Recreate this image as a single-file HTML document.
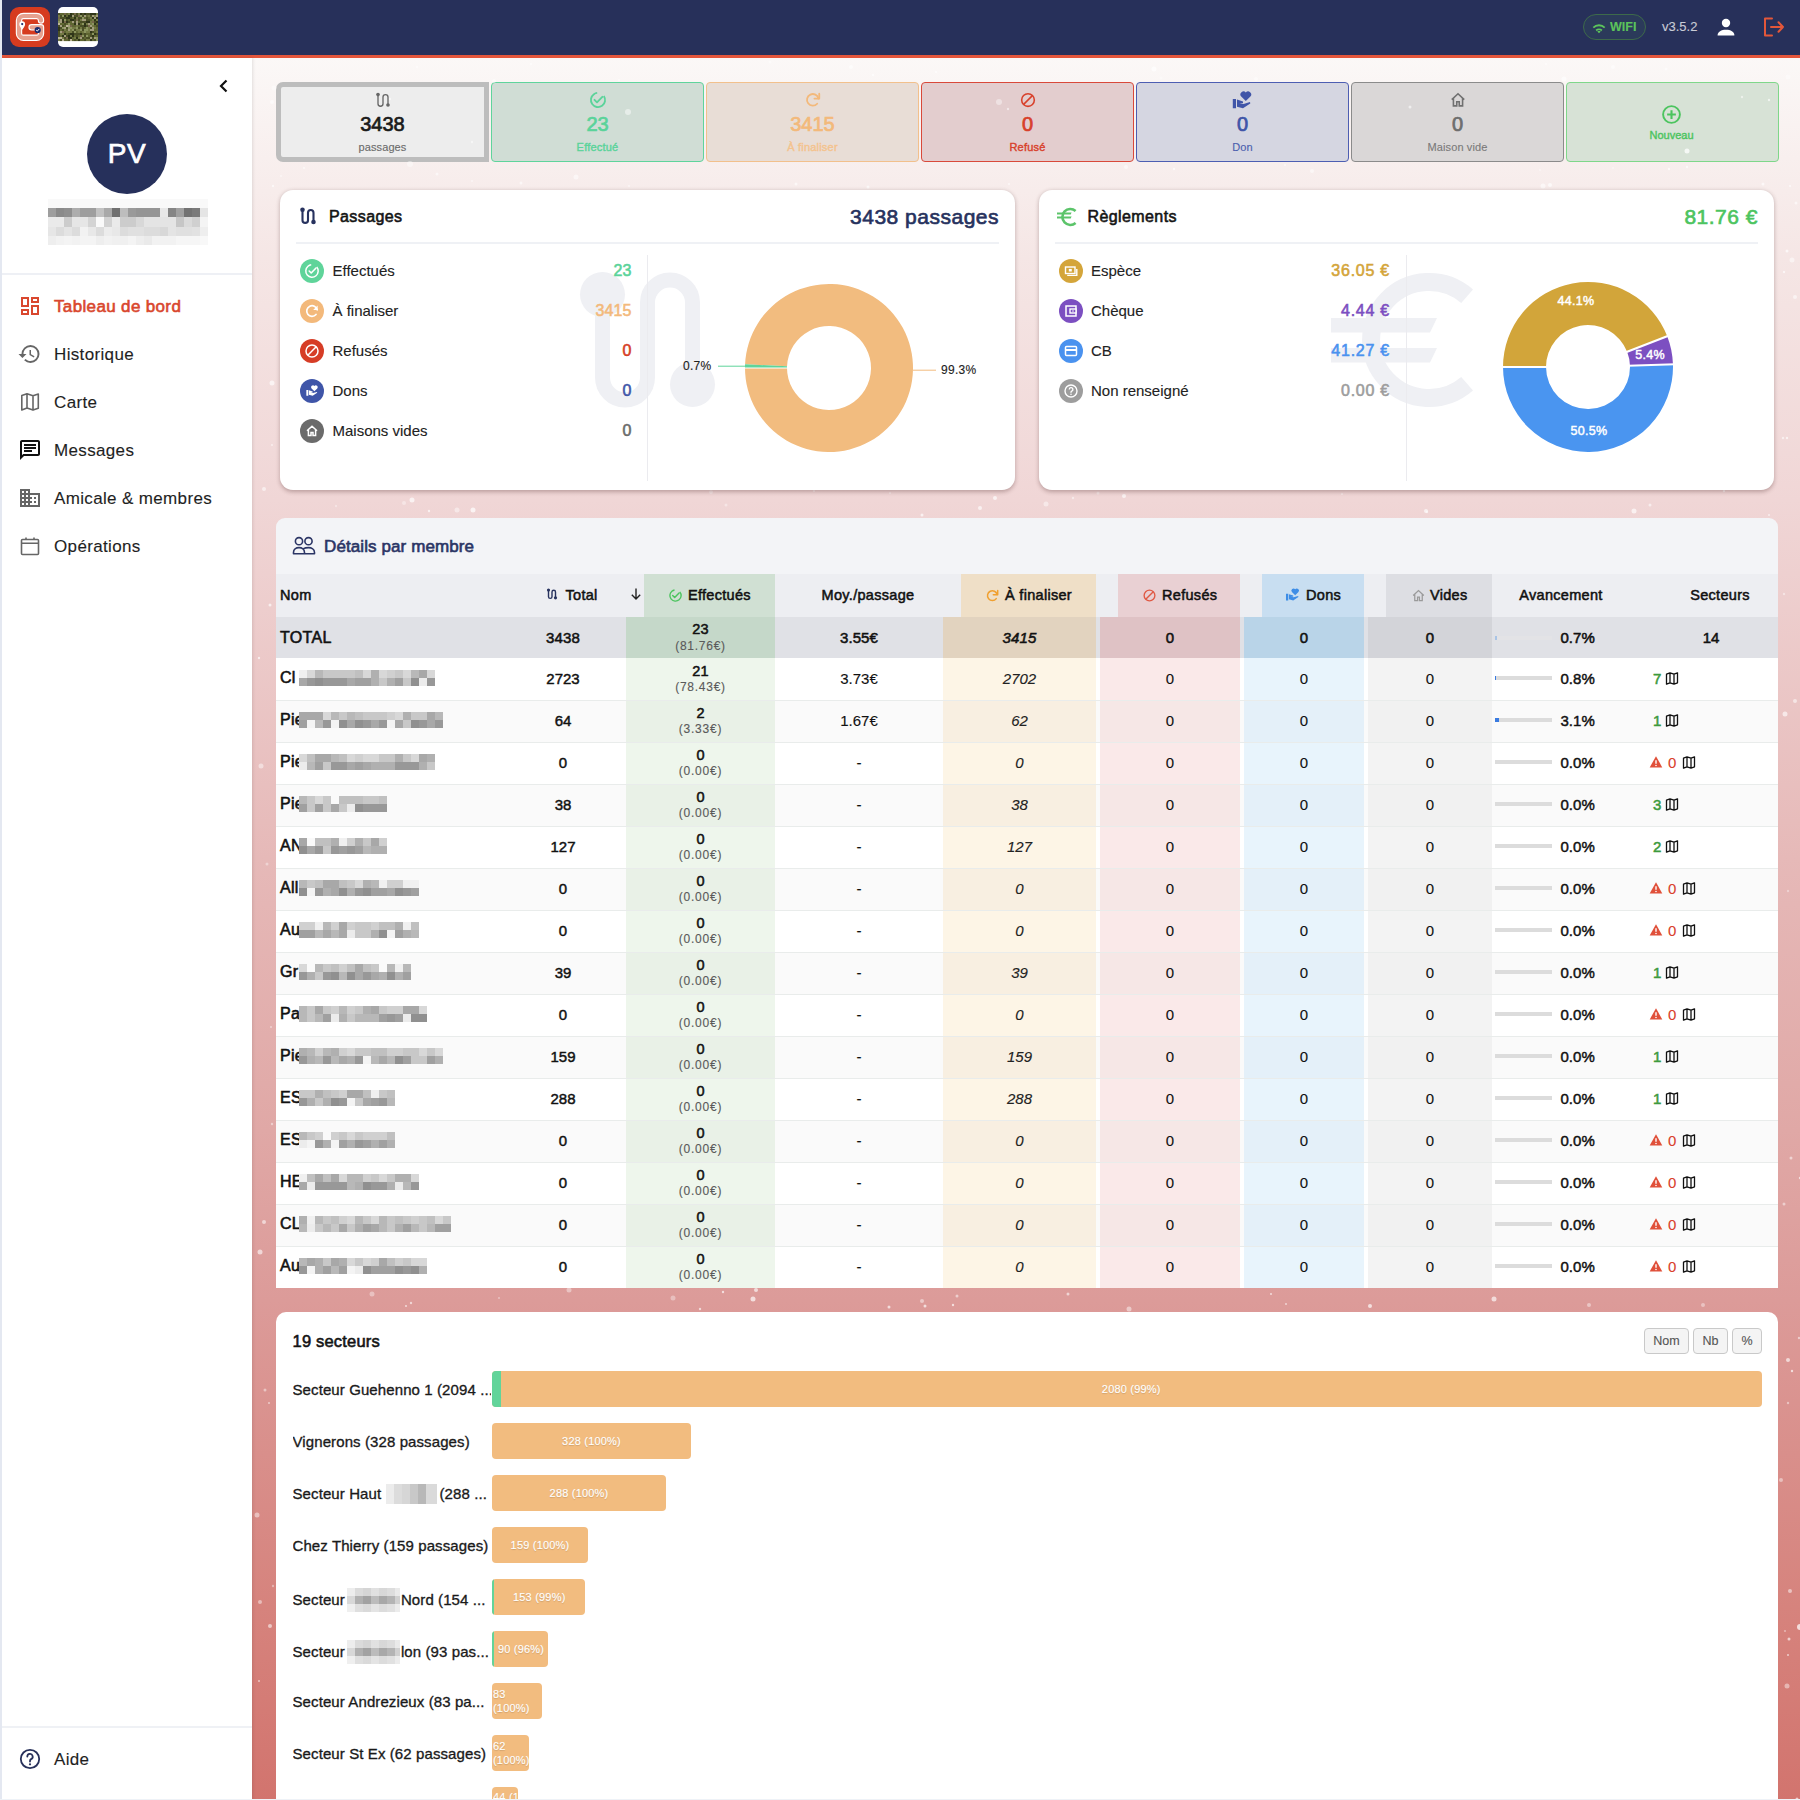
<!DOCTYPE html>
<html lang="fr">
<head>
<meta charset="utf-8">
<title>Tableau de bord</title>
<style>
*{box-sizing:border-box;margin:0;padding:0}
html,body{width:1800px;height:1800px;overflow:hidden}
body{position:relative;font-family:"Liberation Sans",sans-serif;color:#1f1f1f;background:#fff;-webkit-text-stroke:0.12px currentColor}
.a{position:absolute}
svg{display:block}
#topbar{left:0;top:0;width:1800px;height:55px;background:#27305a}
#redline{left:0;top:55px;width:1800px;height:3px;background:#e4553b}
#leftedge{left:0;top:0;width:2px;height:1800px;background:#e4e8f1;z-index:50}
#sidebar{left:2px;top:58px;width:250px;height:1742px;background:#fff;box-shadow:1px 0 3px rgba(0,0,0,.10);z-index:2}
#main{left:252px;top:58px;width:1548px;height:1742px;
 background:linear-gradient(to bottom,#fbf8f7 0px,#f5e6e5 200px,#f0d6d6 442px,#e6b9b8 800px,#e0a8a6 1072px,#dc9b99 1242px,#d6837d 1550px,#d2746e 1742px)}
.card{position:absolute;background:#fff;border-radius:13px;box-shadow:0 1.5px 4px rgba(70,35,35,.32)}
.stat{position:absolute;top:82px;height:80px;border:1px solid;border-radius:4px;text-align:center}
.nav{position:absolute;left:54px;font-size:17px;color:#1f1f1f;line-height:20px;letter-spacing:.35px}
.navi{position:absolute;left:18px}
.blur{display:inline-block;width:51px;height:20px;margin-right:3px;vertical-align:-5px;background:linear-gradient(180deg,rgba(255,255,255,0) 0 12px,rgba(0,0,0,0) 12px 20px),linear-gradient(90deg,#ececec 0 8px,#dcdcdc 8px 16px,#d6d6d6 16px 24px,#c8c8c8 24px 32px,#b8b8b8 32px 40px,#dadada 40px 51px)}
.blur2{display:inline-block;width:53px;height:24px;margin:0 1px 0 2px;vertical-align:-7px;background:linear-gradient(180deg,rgba(255,255,255,.55) 0 8px,rgba(255,255,255,0) 8px 16px,rgba(255,255,255,.6) 16px 24px),linear-gradient(90deg,#d8d8d8 0 8px,#b0b0b0 8px 16px,#a2a2a2 16px 24px,#bcbcbc 24px 32px,#a8a8a8 32px 40px,#b4b4b4 40px 48px,#d0d0d0 48px 53px)}
</style>
</head>
<body>
<div id="leftedge" class="a"></div>
<div id="topbar" class="a"></div>
<div id="redline" class="a"></div>
<div id="sidebar" class="a"></div>
<div id="main" class="a"></div>
<div class="a" style="left:10px;top:7px;width:40px;height:40px;border-radius:9px;background:#d63b1f"></div>
<svg class="a" style="left:10px;top:7px" width="40" height="40" viewBox="10 7 40 40">
<path d="M41 20.6 C41 18 39 16 36.6 16 H23.4 C21 16 19 18 19 20.4 V33.4 C19 35.8 21 37.8 23.4 37.8 H36.6 C39 37.8 41 35.8 41 33.4 V27.3 H31.6" fill="none" stroke="#fff" stroke-width="6.4" stroke-linecap="round" stroke-linejoin="round"/>
<path d="M41 20.6 C41 18 39 16 36.6 16 H23.4 C21 16 19 18 19 20.4 V33.4 C19 35.8 21 37.8 23.4 37.8 H36.6 C39 37.8 41 35.8 41 33.4 V27.3 H31.6" fill="none" stroke="#e6a18f" stroke-width="4.2" stroke-linecap="round" stroke-linejoin="round"/>
<path d="M22.2 36.8 C20.6 34.5 19.3 32.7 19.3 31.2 A2.9 2.9 0 0 1 25.1 31.2 C25.1 32.7 23.8 34.5 22.2 36.8Z" fill="#fff" transform="translate(0 -7)"/>
<circle cx="22.2" cy="24.1" r="1.1" fill="#1b2a6b"/>
<circle cx="37.7" cy="30" r="3.1" fill="#1b2a6b"/>
<path d="M36.2 30.1 L37.3 31.1 L39.3 28.9" fill="none" stroke="#fff" stroke-width="1"/>
</svg>
<div class="a" style="left:58px;top:7px;width:40px;height:40px;border-radius:5px;background:#fff;overflow:hidden"><svg width="40" height="40" viewBox="58 7 40 40"><g><rect x="58" y="13" width="2.1" height="2.1" fill="#4a4f26"/><rect x="60" y="13" width="2.1" height="2.1" fill="#5f6632"/><rect x="62" y="13" width="2.1" height="2.1" fill="#5f6632"/><rect x="64" y="13" width="2.1" height="2.1" fill="#76674a"/><rect x="66" y="13" width="2.1" height="2.1" fill="#5f6632"/><rect x="68" y="13" width="2.1" height="2.1" fill="#747a45"/><rect x="70" y="13" width="2.1" height="2.1" fill="#2f3519"/><rect x="72" y="13" width="2.1" height="2.1" fill="#4a4f26"/><rect x="74" y="13" width="2.1" height="2.1" fill="#76674a"/><rect x="76" y="13" width="2.1" height="2.1" fill="#4a4f26"/><rect x="78" y="13" width="2.1" height="2.1" fill="#747a45"/><rect x="80" y="13" width="2.1" height="2.1" fill="#2f3519"/><rect x="82" y="13" width="2.1" height="2.1" fill="#4a4f26"/><rect x="84" y="13" width="2.1" height="2.1" fill="#2f3519"/><rect x="86" y="13" width="2.1" height="2.1" fill="#4a4f26"/><rect x="88" y="13" width="2.1" height="2.1" fill="#4a4f26"/><rect x="90" y="13" width="2.1" height="2.1" fill="#2f3519"/><rect x="92" y="13" width="2.1" height="2.1" fill="#2f3519"/><rect x="94" y="13" width="2.1" height="2.1" fill="#2f3519"/><rect x="96" y="13" width="2.1" height="2.1" fill="#747a45"/><rect x="58" y="15" width="2.1" height="2.1" fill="#747a45"/><rect x="60" y="15" width="2.1" height="2.1" fill="#4a4f26"/><rect x="62" y="15" width="2.1" height="2.1" fill="#8c9660"/><rect x="64" y="15" width="2.1" height="2.1" fill="#2f3519"/><rect x="66" y="15" width="2.1" height="2.1" fill="#5f6632"/><rect x="68" y="15" width="2.1" height="2.1" fill="#2f3519"/><rect x="70" y="15" width="2.1" height="2.1" fill="#2f3519"/><rect x="72" y="15" width="2.1" height="2.1" fill="#a39d7e"/><rect x="74" y="15" width="2.1" height="2.1" fill="#4a4f26"/><rect x="76" y="15" width="2.1" height="2.1" fill="#4a4f26"/><rect x="78" y="15" width="2.1" height="2.1" fill="#76674a"/><rect x="80" y="15" width="2.1" height="2.1" fill="#8c9660"/><rect x="82" y="15" width="2.1" height="2.1" fill="#4a4f26"/><rect x="84" y="15" width="2.1" height="2.1" fill="#a39d7e"/><rect x="86" y="15" width="2.1" height="2.1" fill="#5f6632"/><rect x="88" y="15" width="2.1" height="2.1" fill="#747a45"/><rect x="90" y="15" width="2.1" height="2.1" fill="#4a4f26"/><rect x="92" y="15" width="2.1" height="2.1" fill="#a39d7e"/><rect x="94" y="15" width="2.1" height="2.1" fill="#747a45"/><rect x="96" y="15" width="2.1" height="2.1" fill="#a39d7e"/><rect x="58" y="17" width="2.1" height="2.1" fill="#76674a"/><rect x="60" y="17" width="2.1" height="2.1" fill="#4a4f26"/><rect x="62" y="17" width="2.1" height="2.1" fill="#4a4f26"/><rect x="64" y="17" width="2.1" height="2.1" fill="#4a4f26"/><rect x="66" y="17" width="2.1" height="2.1" fill="#2f3519"/><rect x="68" y="17" width="2.1" height="2.1" fill="#2f3519"/><rect x="70" y="17" width="2.1" height="2.1" fill="#4a4f26"/><rect x="72" y="17" width="2.1" height="2.1" fill="#5f6632"/><rect x="74" y="17" width="2.1" height="2.1" fill="#2f3519"/><rect x="76" y="17" width="2.1" height="2.1" fill="#747a45"/><rect x="78" y="17" width="2.1" height="2.1" fill="#4a4f26"/><rect x="80" y="17" width="2.1" height="2.1" fill="#4a4f26"/><rect x="82" y="17" width="2.1" height="2.1" fill="#8c9660"/><rect x="84" y="17" width="2.1" height="2.1" fill="#5f6632"/><rect x="86" y="17" width="2.1" height="2.1" fill="#4a4f26"/><rect x="88" y="17" width="2.1" height="2.1" fill="#5f6632"/><rect x="90" y="17" width="2.1" height="2.1" fill="#747a45"/><rect x="92" y="17" width="2.1" height="2.1" fill="#2f3519"/><rect x="94" y="17" width="2.1" height="2.1" fill="#a39d7e"/><rect x="96" y="17" width="2.1" height="2.1" fill="#2f3519"/><rect x="58" y="19" width="2.1" height="2.1" fill="#747a45"/><rect x="60" y="19" width="2.1" height="2.1" fill="#a39d7e"/><rect x="62" y="19" width="2.1" height="2.1" fill="#2f3519"/><rect x="64" y="19" width="2.1" height="2.1" fill="#8c9660"/><rect x="66" y="19" width="2.1" height="2.1" fill="#4a4f26"/><rect x="68" y="19" width="2.1" height="2.1" fill="#5f6632"/><rect x="70" y="19" width="2.1" height="2.1" fill="#2f3519"/><rect x="72" y="19" width="2.1" height="2.1" fill="#2f3519"/><rect x="74" y="19" width="2.1" height="2.1" fill="#4a4f26"/><rect x="76" y="19" width="2.1" height="2.1" fill="#76674a"/><rect x="78" y="19" width="2.1" height="2.1" fill="#4a4f26"/><rect x="80" y="19" width="2.1" height="2.1" fill="#747a45"/><rect x="82" y="19" width="2.1" height="2.1" fill="#a39d7e"/><rect x="84" y="19" width="2.1" height="2.1" fill="#a39d7e"/><rect x="86" y="19" width="2.1" height="2.1" fill="#4a4f26"/><rect x="88" y="19" width="2.1" height="2.1" fill="#4a4f26"/><rect x="90" y="19" width="2.1" height="2.1" fill="#5f6632"/><rect x="92" y="19" width="2.1" height="2.1" fill="#747a45"/><rect x="94" y="19" width="2.1" height="2.1" fill="#2f3519"/><rect x="96" y="19" width="2.1" height="2.1" fill="#747a45"/><rect x="58" y="21" width="2.1" height="2.1" fill="#8c9660"/><rect x="60" y="21" width="2.1" height="2.1" fill="#a39d7e"/><rect x="62" y="21" width="2.1" height="2.1" fill="#2f3519"/><rect x="64" y="21" width="2.1" height="2.1" fill="#76674a"/><rect x="66" y="21" width="2.1" height="2.1" fill="#2f3519"/><rect x="68" y="21" width="2.1" height="2.1" fill="#4a4f26"/><rect x="70" y="21" width="2.1" height="2.1" fill="#5f6632"/><rect x="72" y="21" width="2.1" height="2.1" fill="#a39d7e"/><rect x="74" y="21" width="2.1" height="2.1" fill="#4a4f26"/><rect x="76" y="21" width="2.1" height="2.1" fill="#a39d7e"/><rect x="78" y="21" width="2.1" height="2.1" fill="#5f6632"/><rect x="80" y="21" width="2.1" height="2.1" fill="#4a4f26"/><rect x="82" y="21" width="2.1" height="2.1" fill="#4a4f26"/><rect x="84" y="21" width="2.1" height="2.1" fill="#4a4f26"/><rect x="86" y="21" width="2.1" height="2.1" fill="#2f3519"/><rect x="88" y="21" width="2.1" height="2.1" fill="#2f3519"/><rect x="90" y="21" width="2.1" height="2.1" fill="#747a45"/><rect x="92" y="21" width="2.1" height="2.1" fill="#76674a"/><rect x="94" y="21" width="2.1" height="2.1" fill="#4a4f26"/><rect x="96" y="21" width="2.1" height="2.1" fill="#2f3519"/><rect x="58" y="23" width="2.1" height="2.1" fill="#bdb598"/><rect x="60" y="23" width="2.1" height="2.1" fill="#5f6632"/><rect x="62" y="23" width="2.1" height="2.1" fill="#5f6632"/><rect x="64" y="23" width="2.1" height="2.1" fill="#4a4f26"/><rect x="66" y="23" width="2.1" height="2.1" fill="#5f6632"/><rect x="68" y="23" width="2.1" height="2.1" fill="#8c9660"/><rect x="70" y="23" width="2.1" height="2.1" fill="#5f6632"/><rect x="72" y="23" width="2.1" height="2.1" fill="#5f6632"/><rect x="74" y="23" width="2.1" height="2.1" fill="#2f3519"/><rect x="76" y="23" width="2.1" height="2.1" fill="#a39d7e"/><rect x="78" y="23" width="2.1" height="2.1" fill="#2f3519"/><rect x="80" y="23" width="2.1" height="2.1" fill="#5f6632"/><rect x="82" y="23" width="2.1" height="2.1" fill="#8c9660"/><rect x="84" y="23" width="2.1" height="2.1" fill="#2f3519"/><rect x="86" y="23" width="2.1" height="2.1" fill="#747a45"/><rect x="88" y="23" width="2.1" height="2.1" fill="#a39d7e"/><rect x="90" y="23" width="2.1" height="2.1" fill="#747a45"/><rect x="92" y="23" width="2.1" height="2.1" fill="#8c9660"/><rect x="94" y="23" width="2.1" height="2.1" fill="#2f3519"/><rect x="96" y="23" width="2.1" height="2.1" fill="#5f6632"/><rect x="58" y="25" width="2.1" height="2.1" fill="#4a4f26"/><rect x="60" y="25" width="2.1" height="2.1" fill="#a39d7e"/><rect x="62" y="25" width="2.1" height="2.1" fill="#4a4f26"/><rect x="64" y="25" width="2.1" height="2.1" fill="#5f6632"/><rect x="66" y="25" width="2.1" height="2.1" fill="#bdb598"/><rect x="68" y="25" width="2.1" height="2.1" fill="#a39d7e"/><rect x="70" y="25" width="2.1" height="2.1" fill="#76674a"/><rect x="72" y="25" width="2.1" height="2.1" fill="#5f6632"/><rect x="74" y="25" width="2.1" height="2.1" fill="#5f6632"/><rect x="76" y="25" width="2.1" height="2.1" fill="#747a45"/><rect x="78" y="25" width="2.1" height="2.1" fill="#5f6632"/><rect x="80" y="25" width="2.1" height="2.1" fill="#4a4f26"/><rect x="82" y="25" width="2.1" height="2.1" fill="#4a4f26"/><rect x="84" y="25" width="2.1" height="2.1" fill="#2f3519"/><rect x="86" y="25" width="2.1" height="2.1" fill="#4a4f26"/><rect x="88" y="25" width="2.1" height="2.1" fill="#76674a"/><rect x="90" y="25" width="2.1" height="2.1" fill="#a39d7e"/><rect x="92" y="25" width="2.1" height="2.1" fill="#747a45"/><rect x="94" y="25" width="2.1" height="2.1" fill="#5f6632"/><rect x="96" y="25" width="2.1" height="2.1" fill="#4a4f26"/><rect x="58" y="27" width="2.1" height="2.1" fill="#2f3519"/><rect x="60" y="27" width="2.1" height="2.1" fill="#4a4f26"/><rect x="62" y="27" width="2.1" height="2.1" fill="#8c9660"/><rect x="64" y="27" width="2.1" height="2.1" fill="#a39d7e"/><rect x="66" y="27" width="2.1" height="2.1" fill="#4a4f26"/><rect x="68" y="27" width="2.1" height="2.1" fill="#8c9660"/><rect x="70" y="27" width="2.1" height="2.1" fill="#8c9660"/><rect x="72" y="27" width="2.1" height="2.1" fill="#747a45"/><rect x="74" y="27" width="2.1" height="2.1" fill="#747a45"/><rect x="76" y="27" width="2.1" height="2.1" fill="#8c9660"/><rect x="78" y="27" width="2.1" height="2.1" fill="#4a4f26"/><rect x="80" y="27" width="2.1" height="2.1" fill="#747a45"/><rect x="82" y="27" width="2.1" height="2.1" fill="#4a4f26"/><rect x="84" y="27" width="2.1" height="2.1" fill="#5f6632"/><rect x="86" y="27" width="2.1" height="2.1" fill="#8c9660"/><rect x="88" y="27" width="2.1" height="2.1" fill="#747a45"/><rect x="90" y="27" width="2.1" height="2.1" fill="#4a4f26"/><rect x="92" y="27" width="2.1" height="2.1" fill="#a39d7e"/><rect x="94" y="27" width="2.1" height="2.1" fill="#747a45"/><rect x="96" y="27" width="2.1" height="2.1" fill="#5f6632"/><rect x="58" y="29" width="2.1" height="2.1" fill="#2f3519"/><rect x="60" y="29" width="2.1" height="2.1" fill="#5f6632"/><rect x="62" y="29" width="2.1" height="2.1" fill="#4a4f26"/><rect x="64" y="29" width="2.1" height="2.1" fill="#747a45"/><rect x="66" y="29" width="2.1" height="2.1" fill="#5f6632"/><rect x="68" y="29" width="2.1" height="2.1" fill="#a39d7e"/><rect x="70" y="29" width="2.1" height="2.1" fill="#747a45"/><rect x="72" y="29" width="2.1" height="2.1" fill="#8c9660"/><rect x="74" y="29" width="2.1" height="2.1" fill="#4a4f26"/><rect x="76" y="29" width="2.1" height="2.1" fill="#747a45"/><rect x="78" y="29" width="2.1" height="2.1" fill="#747a45"/><rect x="80" y="29" width="2.1" height="2.1" fill="#8c9660"/><rect x="82" y="29" width="2.1" height="2.1" fill="#4a4f26"/><rect x="84" y="29" width="2.1" height="2.1" fill="#8c9660"/><rect x="86" y="29" width="2.1" height="2.1" fill="#8c9660"/><rect x="88" y="29" width="2.1" height="2.1" fill="#747a45"/><rect x="90" y="29" width="2.1" height="2.1" fill="#a39d7e"/><rect x="92" y="29" width="2.1" height="2.1" fill="#a39d7e"/><rect x="94" y="29" width="2.1" height="2.1" fill="#5f6632"/><rect x="96" y="29" width="2.1" height="2.1" fill="#5f6632"/><rect x="58" y="31" width="2.1" height="2.1" fill="#4a4f26"/><rect x="60" y="31" width="2.1" height="2.1" fill="#a39d7e"/><rect x="62" y="31" width="2.1" height="2.1" fill="#76674a"/><rect x="64" y="31" width="2.1" height="2.1" fill="#5f6632"/><rect x="66" y="31" width="2.1" height="2.1" fill="#747a45"/><rect x="68" y="31" width="2.1" height="2.1" fill="#747a45"/><rect x="70" y="31" width="2.1" height="2.1" fill="#747a45"/><rect x="72" y="31" width="2.1" height="2.1" fill="#4a4f26"/><rect x="74" y="31" width="2.1" height="2.1" fill="#8c9660"/><rect x="76" y="31" width="2.1" height="2.1" fill="#5f6632"/><rect x="78" y="31" width="2.1" height="2.1" fill="#747a45"/><rect x="80" y="31" width="2.1" height="2.1" fill="#5f6632"/><rect x="82" y="31" width="2.1" height="2.1" fill="#747a45"/><rect x="84" y="31" width="2.1" height="2.1" fill="#8c9660"/><rect x="86" y="31" width="2.1" height="2.1" fill="#747a45"/><rect x="88" y="31" width="2.1" height="2.1" fill="#747a45"/><rect x="90" y="31" width="2.1" height="2.1" fill="#2f3519"/><rect x="92" y="31" width="2.1" height="2.1" fill="#4a4f26"/><rect x="94" y="31" width="2.1" height="2.1" fill="#5f6632"/><rect x="96" y="31" width="2.1" height="2.1" fill="#747a45"/><rect x="58" y="33" width="2.1" height="2.1" fill="#4a4f26"/><rect x="60" y="33" width="2.1" height="2.1" fill="#747a45"/><rect x="62" y="33" width="2.1" height="2.1" fill="#747a45"/><rect x="64" y="33" width="2.1" height="2.1" fill="#2f3519"/><rect x="66" y="33" width="2.1" height="2.1" fill="#5f6632"/><rect x="68" y="33" width="2.1" height="2.1" fill="#4a4f26"/><rect x="70" y="33" width="2.1" height="2.1" fill="#2f3519"/><rect x="72" y="33" width="2.1" height="2.1" fill="#2f3519"/><rect x="74" y="33" width="2.1" height="2.1" fill="#4a4f26"/><rect x="76" y="33" width="2.1" height="2.1" fill="#4a4f26"/><rect x="78" y="33" width="2.1" height="2.1" fill="#4a4f26"/><rect x="80" y="33" width="2.1" height="2.1" fill="#2f3519"/><rect x="82" y="33" width="2.1" height="2.1" fill="#5f6632"/><rect x="84" y="33" width="2.1" height="2.1" fill="#4a4f26"/><rect x="86" y="33" width="2.1" height="2.1" fill="#5f6632"/><rect x="88" y="33" width="2.1" height="2.1" fill="#5f6632"/><rect x="90" y="33" width="2.1" height="2.1" fill="#4a4f26"/><rect x="92" y="33" width="2.1" height="2.1" fill="#8c9660"/><rect x="94" y="33" width="2.1" height="2.1" fill="#2f3519"/><rect x="96" y="33" width="2.1" height="2.1" fill="#4a4f26"/><rect x="58" y="35" width="2.1" height="2.1" fill="#4a4f26"/><rect x="60" y="35" width="2.1" height="2.1" fill="#5f6632"/><rect x="62" y="35" width="2.1" height="2.1" fill="#2f3519"/><rect x="64" y="35" width="2.1" height="2.1" fill="#a39d7e"/><rect x="66" y="35" width="2.1" height="2.1" fill="#4a4f26"/><rect x="68" y="35" width="2.1" height="2.1" fill="#2f3519"/><rect x="70" y="35" width="2.1" height="2.1" fill="#747a45"/><rect x="72" y="35" width="2.1" height="2.1" fill="#2f3519"/><rect x="74" y="35" width="2.1" height="2.1" fill="#5f6632"/><rect x="76" y="35" width="2.1" height="2.1" fill="#4a4f26"/><rect x="78" y="35" width="2.1" height="2.1" fill="#5f6632"/><rect x="80" y="35" width="2.1" height="2.1" fill="#76674a"/><rect x="82" y="35" width="2.1" height="2.1" fill="#8c9660"/><rect x="84" y="35" width="2.1" height="2.1" fill="#4a4f26"/><rect x="86" y="35" width="2.1" height="2.1" fill="#8c9660"/><rect x="88" y="35" width="2.1" height="2.1" fill="#5f6632"/><rect x="90" y="35" width="2.1" height="2.1" fill="#4a4f26"/><rect x="92" y="35" width="2.1" height="2.1" fill="#2f3519"/><rect x="94" y="35" width="2.1" height="2.1" fill="#5f6632"/><rect x="96" y="35" width="2.1" height="2.1" fill="#5f6632"/><rect x="58" y="37" width="2.1" height="2.1" fill="#bdb598"/><rect x="60" y="37" width="2.1" height="2.1" fill="#bdb598"/><rect x="62" y="37" width="2.1" height="2.1" fill="#747a45"/><rect x="64" y="37" width="2.1" height="2.1" fill="#4a4f26"/><rect x="66" y="37" width="2.1" height="2.1" fill="#76674a"/><rect x="68" y="37" width="2.1" height="2.1" fill="#2f3519"/><rect x="70" y="37" width="2.1" height="2.1" fill="#2f3519"/><rect x="72" y="37" width="2.1" height="2.1" fill="#5f6632"/><rect x="74" y="37" width="2.1" height="2.1" fill="#747a45"/><rect x="76" y="37" width="2.1" height="2.1" fill="#2f3519"/><rect x="78" y="37" width="2.1" height="2.1" fill="#747a45"/><rect x="80" y="37" width="2.1" height="2.1" fill="#a39d7e"/><rect x="82" y="37" width="2.1" height="2.1" fill="#4a4f26"/><rect x="84" y="37" width="2.1" height="2.1" fill="#5f6632"/><rect x="86" y="37" width="2.1" height="2.1" fill="#4a4f26"/><rect x="88" y="37" width="2.1" height="2.1" fill="#4a4f26"/><rect x="90" y="37" width="2.1" height="2.1" fill="#a39d7e"/><rect x="92" y="37" width="2.1" height="2.1" fill="#4a4f26"/><rect x="94" y="37" width="2.1" height="2.1" fill="#a39d7e"/><rect x="96" y="37" width="2.1" height="2.1" fill="#8c9660"/><rect x="58" y="39" width="2.1" height="2.1" fill="#747a45"/><rect x="60" y="39" width="2.1" height="2.1" fill="#4a4f26"/><rect x="62" y="39" width="2.1" height="2.1" fill="#bdb598"/><rect x="64" y="39" width="2.1" height="2.1" fill="#5f6632"/><rect x="66" y="39" width="2.1" height="2.1" fill="#5f6632"/><rect x="68" y="39" width="2.1" height="2.1" fill="#4a4f26"/><rect x="70" y="39" width="2.1" height="2.1" fill="#bdb598"/><rect x="72" y="39" width="2.1" height="2.1" fill="#5f6632"/><rect x="74" y="39" width="2.1" height="2.1" fill="#4a4f26"/><rect x="76" y="39" width="2.1" height="2.1" fill="#5f6632"/><rect x="78" y="39" width="2.1" height="2.1" fill="#2f3519"/><rect x="80" y="39" width="2.1" height="2.1" fill="#5f6632"/><rect x="82" y="39" width="2.1" height="2.1" fill="#5f6632"/><rect x="84" y="39" width="2.1" height="2.1" fill="#4a4f26"/><rect x="86" y="39" width="2.1" height="2.1" fill="#747a45"/><rect x="88" y="39" width="2.1" height="2.1" fill="#747a45"/><rect x="90" y="39" width="2.1" height="2.1" fill="#2f3519"/><rect x="92" y="39" width="2.1" height="2.1" fill="#5f6632"/><rect x="94" y="39" width="2.1" height="2.1" fill="#4a4f26"/><rect x="96" y="39" width="2.1" height="2.1" fill="#8c9660"/></g></svg></div>
<div class="a" style="left:1583px;top:14px;width:63px;height:26px;border-radius:13px;border:1px solid #3d6a4a;background:#2b3a5a"></div>
<svg class="a" style="left:1591px;top:19px" width="16" height="16" viewBox="0 0 24 24"><path fill="#5cc45b" d="M12 21.5l2.6-2.6a3.7 3.7 0 0 0-5.2 0z M6.8 16.3l1.9 1.9a4.7 4.7 0 0 1 6.6 0l1.9-1.9a7.4 7.4 0 0 0-10.4 0z M2.5 12l1.9 1.9a10.7 10.7 0 0 1 15.2 0l1.9-1.9a13.4 13.4 0 0 0-19 0z"/></svg>
<div class="a" style="left:1610px;top:19px;font-size:12.5px;font-weight:bold;color:#5cc45b;line-height:16px">WIFI</div>
<div class="a" style="left:1662px;top:19px;font-size:13px;color:#c9ccd6;line-height:16px">v3.5.2</div>
<svg class="a" style="left:1714px;top:15px" width="24" height="24" viewBox="0 0 24 24"><circle cx="12" cy="8" r="4.2" fill="#fff"/><path d="M3.6 20.4c0-3.6 3.8-5.6 8.4-5.6s8.4 2 8.4 5.6z" fill="#fff"/></svg>
<svg class="a" style="left:1762px;top:16px" width="24" height="22" viewBox="0 0 24 22"><path d="M10 2.5H3v17h7 M9 11h12 M16.5 6.3L21 11l-4.5 4.7" fill="none" stroke="#e3573a" stroke-width="2" stroke-linecap="round" stroke-linejoin="round"/></svg>

<svg class="a" style="left:216px;top:78px;z-index:3" width="16" height="16" viewBox="0 0 16 16"><path d="M10.5 2.5L5 8l5.5 5.5" fill="none" stroke="#111" stroke-width="2.2"/></svg>
<div class="a" style="left:87px;top:114px;width:80px;height:80px;border-radius:50%;background:#26305b;z-index:3;color:#fff;font-size:28px;line-height:80px;text-align:center;letter-spacing:.5px;-webkit-text-stroke:.7px #fff">PV</div>
<div class="a" style="left:48px;top:199px;width:160px;z-index:3"><div style="height:9px;background:linear-gradient(90deg,#f9f9f9 0px 8px,#f9f9f9 8px 16px,#f9f9f9 16px 24px,#f9f9f9 24px 32px,#f9f9f9 32px 40px,#f9f9f9 40px 48px,#f9f9f9 48px 56px,#f9f9f9 56px 64px,#f9f9f9 64px 72px,#f9f9f9 72px 80px,#f9f9f9 80px 88px,#f9f9f9 88px 96px,#f9f9f9 96px 104px,#f9f9f9 104px 112px,#f9f9f9 112px 120px,#f9f9f9 120px 128px,#f9f9f9 128px 136px,#f9f9f9 136px 144px,#f9f9f9 144px 152px,#f9f9f9 152px 160px)"></div><div style="height:9px;background:linear-gradient(90deg,#9e9e9e 0px 8px,#8a8a8a 8px 16px,#8f8f8f 16px 24px,#adadad 24px 32px,#9e9e9e 32px 40px,#9e9e9e 40px 48px,#c2c2c2 48px 56px,#a9a9a9 56px 64px,#707070 64px 72px,#bdbdbd 72px 80px,#9a9a9a 80px 88px,#959595 88px 96px,#959595 96px 104px,#959595 104px 112px,#e8e8e8 112px 120px,#858585 120px 128px,#a0a0a0 128px 136px,#727272 136px 144px,#7a7a7a 144px 152px,#e5e5e5 152px 160px)"></div><div style="height:10px;background:linear-gradient(90deg,#eaeaea 0px 8px,#eaeaea 8px 16px,#cccccc 16px 24px,#e6e6e6 24px 32px,#e6e6e6 32px 40px,#d4d4d4 40px 48px,#fafafa 48px 56px,#d2d2d2 56px 64px,#eaeaea 64px 72px,#cccccc 72px 80px,#cccccc 80px 88px,#d8d8d8 88px 96px,#e4e4e4 96px 104px,#e4e4e4 104px 112px,#e4e4e4 112px 120px,#e4e4e4 120px 128px,#c6c6c6 128px 136px,#dadada 136px 144px,#d0d0d0 144px 152px,#f4f4f4 152px 160px)"></div><div style="height:9px;background:linear-gradient(90deg,#e6e6e6 0px 8px,#dcdcdc 8px 16px,#e4e4e4 16px 24px,#dcdcdc 24px 32px,#f2f2f2 32px 40px,#e8e8e8 40px 48px,#dcdcdc 48px 56px,#ececec 56px 64px,#e8e8e8 64px 72px,#dcdcdc 72px 80px,#e0e0e0 80px 88px,#e0e0e0 88px 96px,#dcdcdc 96px 104px,#dcdcdc 104px 112px,#d8d8d8 112px 120px,#e4e4e4 120px 128px,#e0e0e0 128px 136px,#e0e0e0 136px 144px,#e2e2e2 144px 152px,#eeeeee 152px 160px)"></div><div style="height:9px;background:linear-gradient(90deg,#eeeeee 0px 8px,#f2f2f2 8px 16px,#f4f4f4 16px 24px,#f2f2f2 24px 32px,#f4f4f4 32px 40px,#f4f4f4 40px 48px,#eeeeee 48px 56px,#f2f2f2 56px 64px,#f0f0f0 64px 72px,#f0f0f0 72px 80px,#f4f4f4 80px 88px,#eeeeee 88px 96px,#eaeaea 96px 104px,#f2f2f2 104px 112px,#f2f2f2 112px 120px,#f2f2f2 120px 128px,#f6f6f6 128px 136px,#f6f6f6 136px 144px,#f6f6f6 144px 152px,#f8f8f8 152px 160px)"></div></div>
<div class="a" style="left:2px;top:273px;width:250px;height:2px;background:#eef0f5;z-index:3"></div>
<svg class="a" style="left:18px;top:294px;z-index:3" width="24" height="24" viewBox="0 0 24 24"><path fill="#d9472e" d="M19 5v2h-4V5h4M9 5v6H5V5h4m10 8v6h-4v-6h4M9 17v2H5v-2h4M21 3h-8v6h8V3zM11 3H3v10h8V3zm10 8h-8v10h8V11zm-10 4H3v6h8v-6z"/></svg>
<div class="nav" style="top:297px;color:#d9472e;z-index:3;-webkit-text-stroke:.6px currentColor;letter-spacing:.35px;">Tableau de bord</div>
<svg class="a" style="left:18px;top:342px;z-index:3" width="24" height="24" viewBox="0 0 24 24"><path fill="#666" d="M13 3a9 9 0 0 0-9 9H1l3.89 3.89.07.14L9 12H6c0-3.87 3.13-7 7-7s7 3.13 7 7-3.13 7-7 7c-1.93 0-3.68-.79-4.94-2.06l-1.42 1.42A8.954 8.954 0 0 0 13 21a9 9 0 0 0 0-18zm-1 5v5l4.28 2.54.72-1.21-3.5-2.08V8H12z" transform="translate(-0.5 0) scale(1)"/></svg>
<div class="nav" style="top:345px;color:#1f1f1f;z-index:3;">Historique</div>
<svg class="a" style="left:18px;top:390px;z-index:3" width="24" height="24" viewBox="0 0 24 24"><path d="M3.8 5.6L9 3.8l6 2 5.3-1.8v14.3L15 20.1l-6-2-5.2 1.8z M9 3.8v14.3 M15 5.8v14.3" fill="none" stroke="#666" stroke-width="1.6" stroke-linejoin="round"/></svg>
<div class="nav" style="top:393px;color:#1f1f1f;z-index:3;">Carte</div>
<svg class="a" style="left:18px;top:438px;z-index:3" width="24" height="24" viewBox="0 0 24 24"><path fill="#111" d="M20 2H4c-1.1 0-1.99.9-1.99 2L2 22l4-4h14c1.1 0 2-.9 2-2V4c0-1.1-.9-2-2-2zm0 14H5.17L4 17.17V4h16v12zM6 12h8v2H6zm0-3h12v2H6zm0-3h12v2H6z" transform="translate(0 0)"/></svg>
<div class="nav" style="top:441px;color:#1f1f1f;z-index:3;">Messages</div>
<svg class="a" style="left:18px;top:486px;z-index:3" width="24" height="24" viewBox="0 0 24 24"><path fill="#666" d="M12 7V3H2v18h20V7H12zM6 19H4v-2h2v2zm0-4H4v-2h2v2zm0-4H4V9h2v2zm0-4H4V5h2v2zm4 12H8v-2h2v2zm0-4H8v-2h2v2zm0-4H8V9h2v2zm0-4H8V5h2v2zm10 12h-8v-2h2v-2h-2v-2h2v-2h-2V9h8v10zm-2-8h-2v2h2v-2zm0 4h-2v2h2v-2z"/></svg>
<div class="nav" style="top:489px;color:#1f1f1f;z-index:3;">Amicale &amp; membres</div>
<svg class="a" style="left:18px;top:534px;z-index:3" width="24" height="24" viewBox="0 0 24 24"><path d="M4.5 5.5h15a1 1 0 0 1 1 1v13a1 1 0 0 1-1 1h-15a1 1 0 0 1-1-1v-13a1 1 0 0 1 1-1z M3.5 9.3h17 M8 3.5v2 M16 3.5v2" fill="none" stroke="#666" stroke-width="1.6"/></svg>
<div class="nav" style="top:537px;color:#1f1f1f;z-index:3;">Opérations</div>
<div class="a" style="left:2px;top:1726px;width:250px;height:2px;background:#eff1f5;z-index:3"></div>
<svg class="a" style="left:18px;top:1747px;z-index:3" width="24" height="24" viewBox="0 0 24 24"><circle cx="12" cy="12" r="9.2" fill="none" stroke="#27305a" stroke-width="1.8"/><path d="M9.3 9.6a2.7 2.7 0 1 1 3.8 2.5c-.7.4-1.1.9-1.1 1.8v.6" fill="none" stroke="#27305a" stroke-width="1.8" stroke-linecap="round"/><circle cx="12" cy="17.3" r="1.1" fill="#27305a"/></svg>
<div class="nav" style="top:1750px;z-index:3">Aide</div>
<svg class="a" style="left:0;top:0;z-index:1" width="1800" height="1800" viewBox="0 0 1800 1800"><g fill="#fff"><circle cx="953" cy="1034" r="3" fill-opacity="0.53"/><circle cx="1576" cy="390" r="3" fill-opacity="0.60"/><circle cx="1480" cy="224" r="2" fill-opacity="0.41"/><circle cx="1087" cy="1609" r="1" fill-opacity="0.59"/><circle cx="866" cy="848" r="1.5" fill-opacity="0.60"/><circle cx="1540" cy="170" r="1" fill-opacity="0.43"/><circle cx="628" cy="112" r="3" fill-opacity="0.48"/><circle cx="1168" cy="400" r="1.5" fill-opacity="0.61"/><circle cx="1027" cy="1213" r="3" fill-opacity="0.61"/><circle cx="883" cy="1019" r="1.2" fill-opacity="0.63"/><circle cx="741" cy="460" r="2" fill-opacity="0.36"/><circle cx="1125" cy="248" r="1.2" fill-opacity="0.69"/><circle cx="852" cy="1727" r="1" fill-opacity="0.44"/><circle cx="1687" cy="151" r="2.5" fill-opacity="0.74"/><circle cx="868" cy="187" r="1.5" fill-opacity="0.66"/><circle cx="671" cy="212" r="2" fill-opacity="0.36"/><circle cx="888" cy="1666" r="1.5" fill-opacity="0.45"/><circle cx="410" cy="164" r="3" fill-opacity="0.42"/><circle cx="1119" cy="839" r="1.5" fill-opacity="0.74"/><circle cx="1444" cy="789" r="2.5" fill-opacity="0.40"/><circle cx="904" cy="430" r="2" fill-opacity="0.70"/><circle cx="1761" cy="1091" r="1" fill-opacity="0.43"/><circle cx="864" cy="1547" r="1.2" fill-opacity="0.37"/><circle cx="480" cy="828" r="1" fill-opacity="0.66"/><circle cx="763" cy="576" r="1.2" fill-opacity="0.38"/><circle cx="577" cy="1168" r="1" fill-opacity="0.59"/><circle cx="829" cy="849" r="3" fill-opacity="0.68"/><circle cx="464" cy="732" r="1.5" fill-opacity="0.47"/><circle cx="607" cy="1122" r="1.5" fill-opacity="0.41"/><circle cx="1226" cy="1024" r="2.5" fill-opacity="0.70"/><circle cx="1187" cy="793" r="1.2" fill-opacity="0.39"/><circle cx="1046" cy="504" r="2.5" fill-opacity="0.45"/><circle cx="1527" cy="1098" r="2" fill-opacity="0.56"/><circle cx="1691" cy="1760" r="1.5" fill-opacity="0.44"/><circle cx="1119" cy="1543" r="1.2" fill-opacity="0.46"/><circle cx="1672" cy="415" r="1" fill-opacity="0.38"/><circle cx="890" cy="493" r="1" fill-opacity="0.42"/><circle cx="824" cy="1056" r="1.5" fill-opacity="0.39"/><circle cx="468" cy="844" r="2" fill-opacity="0.61"/><circle cx="1323" cy="1077" r="1.5" fill-opacity="0.59"/><circle cx="1682" cy="886" r="2" fill-opacity="0.63"/><circle cx="1742" cy="97" r="1.2" fill-opacity="0.54"/><circle cx="1383" cy="615" r="1.2" fill-opacity="0.38"/><circle cx="1098" cy="1342" r="1.5" fill-opacity="0.67"/><circle cx="1669" cy="672" r="3" fill-opacity="0.71"/><circle cx="1601" cy="786" r="1" fill-opacity="0.70"/><circle cx="1140" cy="1147" r="2.5" fill-opacity="0.50"/><circle cx="273" cy="186" r="1.2" fill-opacity="0.61"/><circle cx="1790" cy="1591" r="2" fill-opacity="0.51"/><circle cx="1390" cy="1071" r="3" fill-opacity="0.54"/><circle cx="1091" cy="963" r="1" fill-opacity="0.47"/><circle cx="390" cy="99" r="1.2" fill-opacity="0.55"/><circle cx="1204" cy="1662" r="2" fill-opacity="0.71"/><circle cx="823" cy="309" r="1.5" fill-opacity="0.56"/><circle cx="1419" cy="656" r="3" fill-opacity="0.55"/><circle cx="627" cy="764" r="2" fill-opacity="0.43"/><circle cx="920" cy="1462" r="1.5" fill-opacity="0.70"/><circle cx="848" cy="1075" r="2" fill-opacity="0.43"/><circle cx="462" cy="670" r="1" fill-opacity="0.63"/><circle cx="1723" cy="542" r="1.5" fill-opacity="0.40"/><circle cx="983" cy="1671" r="2.5" fill-opacity="0.50"/><circle cx="1058" cy="1230" r="3" fill-opacity="0.48"/><circle cx="1535" cy="544" r="1" fill-opacity="0.62"/><circle cx="689" cy="676" r="1" fill-opacity="0.61"/><circle cx="880" cy="390" r="2" fill-opacity="0.44"/><circle cx="472" cy="142" r="1.2" fill-opacity="0.53"/><circle cx="1228" cy="1200" r="2" fill-opacity="0.73"/><circle cx="1312" cy="407" r="3" fill-opacity="0.45"/><circle cx="1358" cy="1374" r="1" fill-opacity="0.42"/><circle cx="675" cy="662" r="1.5" fill-opacity="0.51"/><circle cx="1478" cy="1637" r="1.2" fill-opacity="0.51"/><circle cx="1634" cy="735" r="3" fill-opacity="0.53"/><circle cx="1221" cy="1643" r="2.5" fill-opacity="0.57"/><circle cx="1263" cy="935" r="2" fill-opacity="0.54"/><circle cx="1261" cy="417" r="1.2" fill-opacity="0.44"/><circle cx="1645" cy="1766" r="2" fill-opacity="0.56"/><circle cx="1477" cy="617" r="1" fill-opacity="0.49"/><circle cx="382" cy="827" r="2.5" fill-opacity="0.66"/><circle cx="1008" cy="109" r="1.2" fill-opacity="0.52"/><circle cx="308" cy="988" r="1.5" fill-opacity="0.54"/><circle cx="1800" cy="1627" r="3" fill-opacity="0.73"/><circle cx="1016" cy="1712" r="1.2" fill-opacity="0.65"/><circle cx="933" cy="1032" r="1.5" fill-opacity="0.56"/><circle cx="1558" cy="1034" r="2" fill-opacity="0.62"/><circle cx="1730" cy="1574" r="1.5" fill-opacity="0.47"/><circle cx="472" cy="1008" r="2" fill-opacity="0.58"/><circle cx="565" cy="992" r="1" fill-opacity="0.59"/><circle cx="297" cy="1747" r="2.5" fill-opacity="0.57"/><circle cx="1784" cy="272" r="1.2" fill-opacity="0.63"/><circle cx="356" cy="997" r="2.5" fill-opacity="0.72"/><circle cx="1491" cy="763" r="1.5" fill-opacity="0.54"/><circle cx="450" cy="815" r="3" fill-opacity="0.56"/><circle cx="422" cy="790" r="1" fill-opacity="0.72"/><circle cx="454" cy="1416" r="1" fill-opacity="0.36"/><circle cx="494" cy="81" r="2" fill-opacity="0.48"/><circle cx="803" cy="1138" r="1.2" fill-opacity="0.55"/><circle cx="1154" cy="1542" r="2" fill-opacity="0.64"/><circle cx="1338" cy="1589" r="1" fill-opacity="0.50"/><circle cx="893" cy="981" r="1.5" fill-opacity="0.57"/><circle cx="1589" cy="989" r="1.5" fill-opacity="0.56"/><circle cx="1570" cy="1124" r="1.5" fill-opacity="0.44"/><circle cx="1399" cy="1470" r="1.5" fill-opacity="0.48"/><circle cx="741" cy="1666" r="1.5" fill-opacity="0.66"/><circle cx="555" cy="229" r="1.5" fill-opacity="0.40"/><circle cx="390" cy="735" r="2.5" fill-opacity="0.68"/><circle cx="906" cy="1434" r="1.5" fill-opacity="0.43"/><circle cx="1225" cy="1450" r="1.2" fill-opacity="0.43"/><circle cx="1309" cy="1646" r="2" fill-opacity="0.40"/><circle cx="1036" cy="1379" r="1.5" fill-opacity="0.67"/><circle cx="999" cy="102" r="3" fill-opacity="0.41"/><circle cx="539" cy="415" r="1.5" fill-opacity="0.75"/><circle cx="1687" cy="226" r="1" fill-opacity="0.40"/><circle cx="1307" cy="195" r="1.2" fill-opacity="0.48"/><circle cx="976" cy="957" r="2.5" fill-opacity="0.43"/><circle cx="831" cy="1163" r="1" fill-opacity="0.69"/><circle cx="534" cy="850" r="2" fill-opacity="0.51"/><circle cx="556" cy="347" r="1" fill-opacity="0.48"/><circle cx="385" cy="1525" r="2.5" fill-opacity="0.58"/><circle cx="549" cy="1077" r="2" fill-opacity="0.67"/><circle cx="653" cy="1646" r="1.5" fill-opacity="0.68"/><circle cx="881" cy="1620" r="2" fill-opacity="0.66"/><circle cx="1437" cy="766" r="1.5" fill-opacity="0.38"/><circle cx="782" cy="876" r="1" fill-opacity="0.71"/><circle cx="1785" cy="1631" r="1" fill-opacity="0.44"/><circle cx="1714" cy="1219" r="2" fill-opacity="0.44"/><circle cx="882" cy="377" r="1.2" fill-opacity="0.51"/><circle cx="1800" cy="1178" r="1.2" fill-opacity="0.65"/><circle cx="1769" cy="100" r="1.2" fill-opacity="0.65"/><circle cx="651" cy="759" r="1" fill-opacity="0.65"/><circle cx="1256" cy="79" r="2" fill-opacity="0.45"/><circle cx="1654" cy="1017" r="2.5" fill-opacity="0.74"/><circle cx="1132" cy="1791" r="3" fill-opacity="0.67"/><circle cx="372" cy="1100" r="1" fill-opacity="0.50"/><circle cx="1705" cy="731" r="1.5" fill-opacity="0.69"/><circle cx="1092" cy="1098" r="2.5" fill-opacity="0.73"/><circle cx="904" cy="977" r="2" fill-opacity="0.50"/><circle cx="696" cy="1200" r="2" fill-opacity="0.62"/><circle cx="1410" cy="107" r="1.5" fill-opacity="0.58"/><circle cx="1233" cy="771" r="2.5" fill-opacity="0.37"/><circle cx="741" cy="752" r="2" fill-opacity="0.38"/><circle cx="1788" cy="891" r="1.2" fill-opacity="0.37"/><circle cx="1703" cy="1305" r="2" fill-opacity="0.40"/><circle cx="1792" cy="260" r="2.5" fill-opacity="0.50"/><circle cx="569" cy="1290" r="2.5" fill-opacity="0.40"/><circle cx="264" cy="1222" r="2" fill-opacity="0.56"/><circle cx="1154" cy="69" r="2.5" fill-opacity="0.64"/><circle cx="1799" cy="1338" r="1.2" fill-opacity="0.52"/><circle cx="1634" cy="511" r="2.5" fill-opacity="0.65"/><circle cx="260" cy="1252" r="2.5" fill-opacity="0.59"/><circle cx="1792" cy="1371" r="1.2" fill-opacity="0.68"/><circle cx="1769" cy="515" r="1" fill-opacity="0.57"/><circle cx="673" cy="1298" r="2.5" fill-opacity="0.36"/><circle cx="1790" cy="186" r="1" fill-opacity="0.67"/><circle cx="1791" cy="1158" r="1.5" fill-opacity="0.52"/><circle cx="259" cy="658" r="1.2" fill-opacity="0.64"/><circle cx="1494" cy="1299" r="2.5" fill-opacity="0.64"/><circle cx="1788" cy="1360" r="2" fill-opacity="0.63"/><circle cx="257" cy="1515" r="2.5" fill-opacity="0.46"/><circle cx="1427" cy="512" r="1.2" fill-opacity="0.50"/><circle cx="267" cy="864" r="1.5" fill-opacity="0.38"/><circle cx="922" cy="1301" r="2" fill-opacity="0.45"/><circle cx="372" cy="1294" r="2.5" fill-opacity="0.38"/><circle cx="265" cy="1390" r="1.5" fill-opacity="0.45"/><circle cx="1784" cy="1204" r="1.5" fill-opacity="0.48"/><circle cx="753" cy="1299" r="2.5" fill-opacity="0.67"/><circle cx="1666" cy="69" r="1.5" fill-opacity="0.51"/><circle cx="1787" cy="1686" r="2.5" fill-opacity="0.44"/><circle cx="272" cy="102" r="2" fill-opacity="0.55"/><circle cx="1795" cy="701" r="2" fill-opacity="0.54"/><circle cx="1124" cy="496" r="2" fill-opacity="0.66"/><circle cx="272" cy="445" r="1" fill-opacity="0.54"/><circle cx="711" cy="492" r="2" fill-opacity="0.37"/><circle cx="726" cy="505" r="1.5" fill-opacity="0.38"/><circle cx="417" cy="67" r="1" fill-opacity="0.57"/><circle cx="1781" cy="1480" r="2" fill-opacity="0.44"/><circle cx="1789" cy="1639" r="1.5" fill-opacity="0.62"/><circle cx="796" cy="184" r="1.5" fill-opacity="0.59"/><circle cx="1009" cy="184" r="1" fill-opacity="0.60"/><circle cx="889" cy="1307" r="1.5" fill-opacity="0.65"/><circle cx="1543" cy="186" r="2.5" fill-opacity="0.57"/><circle cx="814" cy="491" r="1" fill-opacity="0.50"/><circle cx="1669" cy="169" r="1.2" fill-opacity="0.70"/><circle cx="1312" cy="171" r="2" fill-opacity="0.50"/><circle cx="260" cy="1602" r="2" fill-opacity="0.46"/><circle cx="723" cy="1292" r="1.2" fill-opacity="0.67"/><circle cx="281" cy="176" r="1" fill-opacity="0.46"/><circle cx="1783" cy="438" r="1.2" fill-opacity="0.56"/><circle cx="1174" cy="169" r="1.2" fill-opacity="0.66"/><circle cx="521" cy="183" r="1.5" fill-opacity="0.57"/><circle cx="995" cy="498" r="2" fill-opacity="0.67"/><circle cx="269" cy="1403" r="1" fill-opacity="0.52"/><circle cx="1787" cy="438" r="1.2" fill-opacity="0.63"/><circle cx="1763" cy="184" r="1.5" fill-opacity="0.63"/><circle cx="1271" cy="1294" r="1" fill-opacity="0.66"/><circle cx="264" cy="489" r="2" fill-opacity="0.56"/><circle cx="1788" cy="1403" r="1.2" fill-opacity="0.44"/><circle cx="457" cy="510" r="2.5" fill-opacity="0.44"/><circle cx="336" cy="506" r="1.2" fill-opacity="0.35"/><circle cx="1796" cy="203" r="1.5" fill-opacity="0.57"/><circle cx="404" cy="503" r="2" fill-opacity="0.38"/><circle cx="1161" cy="78" r="1.5" fill-opacity="0.36"/><circle cx="1788" cy="1655" r="1" fill-opacity="0.62"/><circle cx="576" cy="177" r="2.5" fill-opacity="0.52"/><circle cx="261" cy="766" r="2.5" fill-opacity="0.46"/><circle cx="1285" cy="165" r="1" fill-opacity="0.59"/><circle cx="1286" cy="1304" r="1" fill-opacity="0.58"/><circle cx="1589" cy="1305" r="2" fill-opacity="0.43"/><circle cx="429" cy="511" r="1.2" fill-opacity="0.67"/><circle cx="1785" cy="714" r="2.5" fill-opacity="0.61"/><circle cx="271" cy="1027" r="1" fill-opacity="0.44"/><circle cx="1787" cy="251" r="1.5" fill-opacity="0.68"/><circle cx="980" cy="508" r="2" fill-opacity="0.64"/><circle cx="411" cy="1303" r="1.2" fill-opacity="0.59"/><circle cx="531" cy="64" r="1" fill-opacity="0.64"/><circle cx="1342" cy="494" r="1" fill-opacity="0.40"/><circle cx="925" cy="1306" r="1.5" fill-opacity="0.67"/><circle cx="1687" cy="167" r="1.2" fill-opacity="0.62"/><circle cx="851" cy="67" r="2" fill-opacity="0.57"/><circle cx="873" cy="75" r="1.2" fill-opacity="0.58"/><circle cx="1073" cy="498" r="1.2" fill-opacity="0.47"/><circle cx="936" cy="72" r="1.2" fill-opacity="0.53"/><circle cx="272" cy="1124" r="1.2" fill-opacity="0.44"/><circle cx="1650" cy="505" r="1.5" fill-opacity="0.56"/><circle cx="473" cy="510" r="2.5" fill-opacity="0.70"/><circle cx="1546" cy="64" r="1" fill-opacity="0.57"/><circle cx="1795" cy="297" r="2" fill-opacity="0.55"/><circle cx="770" cy="62" r="1.5" fill-opacity="0.44"/><circle cx="953" cy="1305" r="1.2" fill-opacity="0.67"/><circle cx="1098" cy="493" r="1.5" fill-opacity="0.41"/><circle cx="1788" cy="77" r="2.5" fill-opacity="0.40"/><circle cx="700" cy="1309" r="1.2" fill-opacity="0.62"/><circle cx="272" cy="383" r="2.5" fill-opacity="0.63"/><circle cx="304" cy="168" r="1.2" fill-opacity="0.46"/><circle cx="1564" cy="79" r="2.5" fill-opacity="0.56"/><circle cx="499" cy="1298" r="1" fill-opacity="0.40"/><circle cx="437" cy="174" r="1.5" fill-opacity="0.53"/><circle cx="259" cy="1681" r="1" fill-opacity="0.57"/><circle cx="1370" cy="1306" r="2" fill-opacity="0.69"/><circle cx="412" cy="500" r="2.5" fill-opacity="0.67"/><circle cx="1426" cy="511" r="2" fill-opacity="0.66"/><circle cx="1550" cy="185" r="2" fill-opacity="0.64"/><circle cx="1129" cy="1309" r="2.5" fill-opacity="0.47"/><circle cx="922" cy="515" r="1.5" fill-opacity="0.67"/><circle cx="270" cy="1626" r="2" fill-opacity="0.56"/><circle cx="273" cy="1586" r="1.2" fill-opacity="0.39"/><circle cx="629" cy="186" r="1" fill-opacity="0.52"/><circle cx="1068" cy="1294" r="1.5" fill-opacity="0.58"/><circle cx="1797" cy="1799" r="1.5" fill-opacity="0.65"/><circle cx="1126" cy="167" r="2" fill-opacity="0.55"/><circle cx="406" cy="1306" r="1" fill-opacity="0.66"/><circle cx="1724" cy="491" r="1.2" fill-opacity="0.60"/><circle cx="756" cy="1290" r="2" fill-opacity="0.64"/><circle cx="472" cy="181" r="1.2" fill-opacity="0.37"/><circle cx="957" cy="1296" r="1.5" fill-opacity="0.52"/><circle cx="1613" cy="168" r="1" fill-opacity="0.42"/><circle cx="274" cy="88" r="2.5" fill-opacity="0.42"/><circle cx="619" cy="80" r="1" fill-opacity="0.58"/><circle cx="270" cy="605" r="1.5" fill-opacity="0.65"/><circle cx="1613" cy="67" r="2" fill-opacity="0.50"/><circle cx="1784" cy="594" r="1.2" fill-opacity="0.44"/></g></svg>
<div class="stat" style="left:276px;width:213px;background:#ededed;border:5px solid #bdbdbd;border-radius:7px 0 0 7px"></div>
<div class="stat" style="left:491px;width:213px;background:#d0ddd5;border-color:#5fd49c"></div>
<div class="stat" style="left:706px;width:213px;background:#e8ddd6;border-color:#f2c08c"></div>
<div class="stat" style="left:921px;width:213px;background:#e3cdce;border-color:#d9493a"></div>
<div class="stat" style="left:1136px;width:213px;background:#d5d6e1;border-color:#4d5eb2"></div>
<div class="stat" style="left:1351px;width:213px;background:#dad7d7;border-color:#8b8b8b"></div>
<div class="stat" style="left:1566px;width:213px;background:#d7e2d6;border-color:#7fd78a"></div>
<svg class="a" style="left:372.5px;top:90px;z-index:4;" width="20" height="20" viewBox="0 0 24 24"><path d="M6 6.5V16.5a3 3 0 0 0 6 0V8.5a3 3 0 0 1 6 0V17.5" fill="none" stroke="#666" stroke-width="1.6" stroke-linecap="round"/><circle cx="6" cy="5.5" r="2.2" fill="#666"/><circle cx="18" cy="18" r="2.2" fill="#666"/></svg>
<div class="a" style="top:111.67px;font-size:20px;line-height:25px;color:#1b1b1b;z-index:4;white-space:nowrap;-webkit-text-stroke:0.72px currentColor;letter-spacing:0px;left:82.5px;width:600px;text-align:center;">3438</div>
<div class="a" style="top:139.99px;font-size:11px;line-height:14px;color:#6a6a6a;z-index:4;white-space:nowrap;left:82.5px;width:600px;text-align:center;letter-spacing:.1px">passages</div>
<svg class="a" style="left:587.5px;top:90px;z-index:4;" width="20" height="20" viewBox="0 0 24 24"><circle cx="12" cy="12" r="8.5" fill="none" stroke="#5ad39a" stroke-width="2.2" stroke-dasharray="44 9.4" transform="rotate(-35 12 12)"/><path d="M7.8 11.8l3 3 6.4-6.6" fill="none" stroke="#5ad39a" stroke-width="2.2" stroke-linecap="round" stroke-linejoin="round"/></svg>
<div class="a" style="top:111.67px;font-size:20px;line-height:25px;color:#5ad39a;z-index:4;white-space:nowrap;-webkit-text-stroke:0.72px currentColor;letter-spacing:0px;left:297.5px;width:600px;text-align:center;">23</div>
<div class="a" style="top:139.99px;font-size:11px;line-height:14px;color:#5ad39a;z-index:4;white-space:nowrap;-webkit-text-stroke:0.40px currentColor;letter-spacing:0.2px;left:297.5px;width:600px;text-align:center;">Effectué</div>
<svg class="a" style="left:802.5px;top:90px;z-index:4;" width="20" height="20" viewBox="0 0 24 24"><path d="M18.6 10.2A7 7 0 1 0 17 16.5" fill="none" stroke="#f3b97b" stroke-width="2.2" stroke-linecap="round"/><path d="M19.5 4.5v5.8h-5.8" fill="none" stroke="#f3b97b" stroke-width="2.2" stroke-linecap="round" stroke-linejoin="round"/></svg>
<div class="a" style="top:111.67px;font-size:20px;line-height:25px;color:#f3b97b;z-index:4;white-space:nowrap;-webkit-text-stroke:0.72px currentColor;letter-spacing:0px;left:512.5px;width:600px;text-align:center;">3415</div>
<div class="a" style="top:139.99px;font-size:11px;line-height:14px;color:#f4c38e;z-index:4;white-space:nowrap;-webkit-text-stroke:0.40px currentColor;letter-spacing:0.2px;left:512.5px;width:600px;text-align:center;">À finaliser</div>
<svg class="a" style="left:1017.5px;top:90px;z-index:4;" width="20" height="20" viewBox="0 0 24 24"><circle cx="12" cy="12" r="7.6" fill="none" stroke="#d8402b" stroke-width="1.9"/><path d="M6.8 17.2L17.2 6.8" stroke="#d8402b" stroke-width="1.9"/></svg>
<div class="a" style="top:111.67px;font-size:20px;line-height:25px;color:#d8402b;z-index:4;white-space:nowrap;-webkit-text-stroke:0.72px currentColor;letter-spacing:0px;left:727.5px;width:600px;text-align:center;">0</div>
<div class="a" style="top:139.99px;font-size:11px;line-height:14px;color:#d8402b;z-index:4;white-space:nowrap;-webkit-text-stroke:0.40px currentColor;letter-spacing:0.2px;left:727.5px;width:600px;text-align:center;">Refusé</div>
<svg class="a" style="left:1230px;top:87.5px;z-index:4;" width="24" height="24" viewBox="0 0 24 24"><path d="M2.8 11h3.2v9.3H2.8z M7 11.5l6 2v1.5H9.5l4 1 6.5-2 .3 1.5-7.3 4.8-6-1.5z M15.8 13L11.2 8.6A2.9 2.9 0 0 1 15.8 4.6 2.9 2.9 0 0 1 20.4 8.6z" fill="#4055a8"/></svg>
<div class="a" style="top:111.67px;font-size:20px;line-height:25px;color:#4055a8;z-index:4;white-space:nowrap;-webkit-text-stroke:0.72px currentColor;letter-spacing:0px;left:942.5px;width:600px;text-align:center;">0</div>
<div class="a" style="top:139.99px;font-size:11px;line-height:14px;color:#4b5eae;z-index:4;white-space:nowrap;left:942.5px;width:600px;text-align:center;letter-spacing:.1px">Don</div>
<svg class="a" style="left:1447.5px;top:90px;z-index:4;" width="20" height="20" viewBox="0 0 24 24"><path d="M4.5 11.5L12 4.5l7.5 7 M6.5 10v9h4v-5h3v5h4v-9" fill="none" stroke="#707070" stroke-width="1.9" stroke-linejoin="miter"/></svg>
<div class="a" style="top:111.67px;font-size:20px;line-height:25px;color:#6e6e6e;z-index:4;white-space:nowrap;-webkit-text-stroke:0.72px currentColor;letter-spacing:0px;left:1157.5px;width:600px;text-align:center;">0</div>
<div class="a" style="top:139.99px;font-size:11px;line-height:14px;color:#7a7a7a;z-index:4;white-space:nowrap;left:1157.5px;width:600px;text-align:center;letter-spacing:.1px">Maison vide</div>
<svg class="a" style="left:1661px;top:103.5px;z-index:4;" width="21" height="21" viewBox="0 0 24 24"><circle cx="12" cy="12" r="9.6" fill="none" stroke="#4cc45f" stroke-width="2.2"/><path d="M12 7v10M7 12h10" stroke="#4cc45f" stroke-width="2.4"/></svg>
<div class="a" style="top:128.39px;font-size:11px;line-height:14px;color:#4cc45f;z-index:4;white-space:nowrap;-webkit-text-stroke:0.40px currentColor;letter-spacing:0px;left:1371.5px;width:600px;text-align:center;">Nouveau</div>
<div class="card" style="left:280px;top:190px;width:735px;height:300px;z-index:3"></div>
<svg class="a" style="left:297px;top:205px;z-index:4;" width="22" height="22" viewBox="0 0 24 24"><path d="M6 6.5V16.5a3 3 0 0 0 6 0V8.5a3 3 0 0 1 6 0V17.5" fill="none" stroke="#27325e" stroke-width="2.3" stroke-linecap="round"/><circle cx="6" cy="5.2" r="2.5" fill="#27325e"/><circle cx="18" cy="18.6" r="2.5" fill="#27325e"/></svg>
<div class="a" style="top:207.06px;font-size:16px;line-height:20px;color:#141414;z-index:4;white-space:nowrap;-webkit-text-stroke:0.58px currentColor;letter-spacing:0.4px;left:329px;">Passages</div>
<div class="a" style="top:204.02px;font-size:21px;line-height:26px;color:#27325e;z-index:4;white-space:nowrap;right:801px;letter-spacing:.5px;-webkit-text-stroke:.65px #27325e">3438 passages</div>
<div class="a" style="left:296px;top:242px;width:703px;height:2px;background:#eff1f5;z-index:4"></div>
<svg class="a" style="left:560px;top:250px;z-index:4;" width="160" height="180" viewBox="560 250 160 180"><path d="M602.5 294.5V377.5A22.5 22.5 0 0 0 647.5 377.5V302.5A22.5 22.5 0 0 1 692.5 302.5V384.5" fill="none" stroke="#eff0f4" stroke-width="15"/><circle cx="602.5" cy="294.5" r="22.5" fill="#eff0f4"/><circle cx="692.5" cy="384.5" r="22.5" fill="#eff0f4"/></svg>
<div class="a" style="left:647px;top:255px;width:1px;height:226px;background:#ebebef;z-index:4"></div>
<svg class="a" style="left:300px;top:259px;z-index:4;" width="24" height="24" viewBox="0 0 24 24"><circle cx="12" cy="12" r="12" fill="#5fd49a"/><circle cx="12" cy="12" r="6.2" fill="none" stroke="#fff" stroke-width="1.5" stroke-dasharray="32 7" transform="rotate(-40 12 12)"/><path d="M9.2 12l2 2 4.6-4.8" fill="none" stroke="#fff" stroke-width="1.6" stroke-linecap="round" stroke-linejoin="round"/></svg>
<div class="a" style="top:260.70px;font-size:15px;line-height:19px;color:#222;z-index:4;white-space:nowrap;left:332.5px;">Effectués</div>
<div class="a" style="top:261.26px;font-size:16px;line-height:20px;color:#5ad39a;z-index:4;white-space:nowrap;-webkit-text-stroke:0.58px currentColor;letter-spacing:0.1px;right:1168.5px;">23</div>
<svg class="a" style="left:300px;top:299px;z-index:4;" width="24" height="24" viewBox="0 0 24 24"><circle cx="12" cy="12" r="12" fill="#f3b97b"/><path d="M17.2 10.8A5.3 5.3 0 1 0 16 15.5" fill="none" stroke="#fff" stroke-width="1.7" stroke-linecap="round"/><path d="M17.6 6.6v4.4h-4.4z" fill="#fff"/></svg>
<div class="a" style="top:300.70px;font-size:15px;line-height:19px;color:#222;z-index:4;white-space:nowrap;left:332.5px;">À finaliser</div>
<div class="a" style="top:301.26px;font-size:16px;line-height:20px;color:#f3b97b;z-index:4;white-space:nowrap;-webkit-text-stroke:0.58px currentColor;letter-spacing:0.1px;right:1168.5px;">3415</div>
<svg class="a" style="left:300px;top:339px;z-index:4;" width="24" height="24" viewBox="0 0 24 24"><circle cx="12" cy="12" r="12" fill="#d63d26"/><circle cx="12" cy="12" r="6" fill="none" stroke="#fff" stroke-width="1.5"/><path d="M7.8 16.2L16.2 7.8" stroke="#fff" stroke-width="1.5"/></svg>
<div class="a" style="top:340.70px;font-size:15px;line-height:19px;color:#222;z-index:4;white-space:nowrap;left:332.5px;">Refusés</div>
<div class="a" style="top:341.26px;font-size:16px;line-height:20px;color:#d63d26;z-index:4;white-space:nowrap;-webkit-text-stroke:0.58px currentColor;letter-spacing:0.1px;right:1168.5px;">0</div>
<svg class="a" style="left:300px;top:379px;z-index:4;" width="24" height="24" viewBox="0 0 24 24"><circle cx="12" cy="12" r="12" fill="#3f55a8"/><g transform="translate(4.6 4.2) scale(.62)"><path d="M2.8 11h3.2v9.3H2.8z M7 11.5l6 2v1.5H9.5l4 1 6.5-2 .3 1.5-7.3 4.8-6-1.5z M15.8 13L11.2 8.6A2.9 2.9 0 0 1 15.8 4.6 2.9 2.9 0 0 1 20.4 8.6z" fill="#fff"/></g></svg>
<div class="a" style="top:380.70px;font-size:15px;line-height:19px;color:#222;z-index:4;white-space:nowrap;left:332.5px;">Dons</div>
<div class="a" style="top:381.26px;font-size:16px;line-height:20px;color:#3f55a8;z-index:4;white-space:nowrap;-webkit-text-stroke:0.58px currentColor;letter-spacing:0.1px;right:1168.5px;">0</div>
<svg class="a" style="left:300px;top:419px;z-index:4;" width="24" height="24" viewBox="0 0 24 24"><circle cx="12" cy="12" r="12" fill="#6b6b6b"/><path d="M7 11.8L12 7.2l5 4.6 M8.4 10.6v6h2.6v-3.2h2v3.2h2.6v-6" fill="none" stroke="#fff" stroke-width="1.5"/></svg>
<div class="a" style="top:420.70px;font-size:15px;line-height:19px;color:#222;z-index:4;white-space:nowrap;left:332.5px;">Maisons vides</div>
<div class="a" style="top:421.26px;font-size:16px;line-height:20px;color:#6b6b6b;z-index:4;white-space:nowrap;-webkit-text-stroke:0.58px currentColor;letter-spacing:0.1px;right:1168.5px;">0</div>
<svg class="a" style="left:700px;top:270px;z-index:4;" width="260" height="200" viewBox="700 270 260 200"><path d="M745.08 364.34A84 84 0 1 1 745.00 368.00L787.00 368.00A42 42 0 1 0 787.04 366.17Z" fill="#f2bc7f"/><path d="M745.00 368.00A84 84 0 0 1 745.08 364.34L787.04 366.17A42 42 0 0 0 787.00 368.00Z" fill="#5fd49a"/><path d="M745 368H787" stroke="#fff" stroke-width="1"/><path d="M718 366.2H745" stroke="#5fd49a" stroke-width="1"/><path d="M913 370.2H936" stroke="#f2bc7f" stroke-width="1"/></svg>
<div class="a" style="top:358.84px;font-size:12px;line-height:15px;color:#222;z-index:4;white-space:nowrap;right:1088.5px;letter-spacing:.3px">0.7%</div>
<div class="a" style="top:362.84px;font-size:12px;line-height:15px;color:#222;z-index:4;white-space:nowrap;left:941px;letter-spacing:.3px">99.3%</div>
<div class="card" style="left:1039px;top:190px;width:735px;height:300px;z-index:3"></div>
<svg class="a" style="left:1050px;top:200px;z-index:4;" width="30" height="30" viewBox="1050 200 30 30"><path d="M1075.6 210.9A8 8 0 1 0 1075.6 223.0" fill="none" stroke="#5cc46a" stroke-width="2.6"/><path d="M1057 212.5H1071.6L1070.7 214.5H1057Z M1057 216.6H1071.6L1070.7 218.6H1057Z" fill="#5cc46a"/></svg>
<div class="a" style="top:207.06px;font-size:16px;line-height:20px;color:#141414;z-index:4;white-space:nowrap;-webkit-text-stroke:0.58px currentColor;letter-spacing:0.4px;left:1087.5px;">Règlements</div>
<div class="a" style="top:204.02px;font-size:21px;line-height:26px;color:#4cc45f;z-index:4;white-space:nowrap;right:42px;letter-spacing:.5px;-webkit-text-stroke:.65px #4cc45f">81.76 €</div>
<div class="a" style="left:1055px;top:242px;width:703px;height:2px;background:#eff1f5;z-index:4"></div>
<svg class="a" style="left:1320px;top:265px;z-index:4;" width="170" height="150" viewBox="1320 265 170 150"><path d="M1467.1 296.2A58 58 0 1 0 1467.1 383.8" fill="none" stroke="#eff0f4" stroke-width="18"/><path d="M1331 318H1437L1430 332.5H1331Z M1331 348H1437L1430 362.5H1331Z" fill="#eff0f4"/></svg>
<div class="a" style="left:1406px;top:255px;width:1px;height:226px;background:#ebebef;z-index:4"></div>
<svg class="a" style="left:1059px;top:259px;z-index:4;" width="24" height="24" viewBox="0 0 24 24"><circle cx="12" cy="12" r="12" fill="#d4a53a"/><rect x="6.5" y="8" width="9.5" height="6.5" fill="none" stroke="#fff" stroke-width="1.4"/><rect x="9.8" y="9.9" width="3" height="2.6" fill="#fff"/><path d="M8.2 16.4h9.6V10" fill="none" stroke="#fff" stroke-width="1.4"/></svg>
<div class="a" style="top:260.70px;font-size:15px;line-height:19px;color:#222;z-index:4;white-space:nowrap;left:1091px;">Espèce</div>
<div class="a" style="top:261.26px;font-size:16px;line-height:20px;color:#d4a53a;z-index:4;white-space:nowrap;-webkit-text-stroke:0.58px currentColor;letter-spacing:0.75px;right:410px;">36.05 €</div>
<svg class="a" style="left:1059px;top:299px;z-index:4;" width="24" height="24" viewBox="0 0 24 24"><circle cx="12" cy="12" r="12" fill="#7c4fc1"/><rect x="7" y="7" width="10" height="10" fill="none" stroke="#fff" stroke-width="1.5"/><rect x="11" y="10" width="6" height="4" fill="#7c4fc1" stroke="#fff" stroke-width="1.4"/><circle cx="14" cy="12" r=".8" fill="#fff"/></svg>
<div class="a" style="top:300.70px;font-size:15px;line-height:19px;color:#222;z-index:4;white-space:nowrap;left:1091px;">Chèque</div>
<div class="a" style="top:301.26px;font-size:16px;line-height:20px;color:#7c4fc1;z-index:4;white-space:nowrap;-webkit-text-stroke:0.58px currentColor;letter-spacing:0.75px;right:410px;">4.44 €</div>
<svg class="a" style="left:1059px;top:339px;z-index:4;" width="24" height="24" viewBox="0 0 24 24"><circle cx="12" cy="12" r="12" fill="#4a92ef"/><rect x="6.5" y="7.5" width="11" height="9" rx="1" fill="none" stroke="#fff" stroke-width="1.5"/><rect x="6.5" y="10" width="11" height="2" fill="#fff"/></svg>
<div class="a" style="top:340.70px;font-size:15px;line-height:19px;color:#222;z-index:4;white-space:nowrap;left:1091px;">CB</div>
<div class="a" style="top:341.26px;font-size:16px;line-height:20px;color:#4a92ef;z-index:4;white-space:nowrap;-webkit-text-stroke:0.58px currentColor;letter-spacing:0.75px;right:410px;">41.27 €</div>
<svg class="a" style="left:1059px;top:379px;z-index:4;" width="24" height="24" viewBox="0 0 24 24"><circle cx="12" cy="12" r="12" fill="#9d9d9d"/><circle cx="12" cy="12" r="6" fill="none" stroke="#fff" stroke-width="1.4"/><path d="M10.3 10.5a1.8 1.8 0 1 1 2.5 1.6c-.5.3-.8.6-.8 1.2v.4" fill="none" stroke="#fff" stroke-width="1.4"/><circle cx="12" cy="15.3" r=".8" fill="#fff"/></svg>
<div class="a" style="top:380.70px;font-size:15px;line-height:19px;color:#222;z-index:4;white-space:nowrap;left:1091px;">Non renseigné</div>
<div class="a" style="top:381.26px;font-size:16px;line-height:20px;color:#9d9d9d;z-index:4;white-space:nowrap;-webkit-text-stroke:0.58px currentColor;letter-spacing:0.75px;right:410px;">0.00 €</div>
<svg class="a" style="left:1490px;top:270px;z-index:4;" width="200" height="200" viewBox="1490 270 200 200"><path d="M1503.00 367.00A85 85 0 0 1 1667.23 336.21L1627.15 351.78A42 42 0 0 0 1546.00 367.00Z" fill="#d2a53a"/><path d="M1667.23 336.21A85 85 0 0 1 1672.96 364.33L1629.98 365.68A42 42 0 0 0 1627.15 351.78Z" fill="#7c4fc1"/><path d="M1672.96 364.33A85 85 0 1 1 1503.00 367.00L1546.00 367.00A42 42 0 1 0 1629.98 365.68Z" fill="#4a95f0"/><path d="M1548.00 367.00L1501.00 367.00" stroke="#fff" stroke-width="2.2"/><path d="M1625.28 352.51L1669.09 335.48" stroke="#fff" stroke-width="2.2"/><path d="M1627.98 365.74L1674.96 364.27" stroke="#fff" stroke-width="2.2"/></svg>
<div class="a" style="top:293.17px;font-size:12.5px;line-height:16px;color:#fff;z-index:4;white-space:nowrap;-webkit-text-stroke:0.45px currentColor;letter-spacing:0.3px;left:1276px;width:600px;text-align:center;">44.1%</div>
<div class="a" style="top:347.17px;font-size:12.5px;line-height:16px;color:#fff;z-index:4;white-space:nowrap;-webkit-text-stroke:0.45px currentColor;letter-spacing:0.3px;left:1350px;width:600px;text-align:center;">5.4%</div>
<div class="a" style="top:423.17px;font-size:12.5px;line-height:16px;color:#fff;z-index:4;white-space:nowrap;-webkit-text-stroke:0.45px currentColor;letter-spacing:0.3px;left:1289px;width:600px;text-align:center;">50.5%</div>
<div class="card" style="left:276px;top:518px;width:1502px;height:770px;background:#f3f4f7;border-radius:9px 9px 0 0;z-index:3;box-shadow:none"></div>
<svg class="a" style="left:291px;top:536px;z-index:4;" width="26" height="20" viewBox="0 0 26 20"><circle cx="8" cy="5.2" r="3.6" fill="none" stroke="#2b3565" stroke-width="1.6"/><circle cx="17.5" cy="5.2" r="3.6" fill="none" stroke="#2b3565" stroke-width="1.6"/><path d="M2.5 17.8v-1.4c0-3 2.5-4.8 5.5-4.8 3 0 5.5 1.8 5.5 4.8v1.4z M12.5 12.6c1.3-.7 3-1 5-1 3 0 6 1.6 6 4.8v1.4h-10.5" fill="none" stroke="#2b3565" stroke-width="1.6" stroke-linejoin="round"/></svg>
<div class="a" style="top:535.91px;font-size:17px;line-height:21px;color:#2b3565;z-index:4;white-space:nowrap;-webkit-text-stroke:0.61px currentColor;letter-spacing:0.1px;left:324px;">Détails par membre</div>
<div class="a" style="left:276px;top:574px;width:1502px;height:43px;background:#edeef2;z-index:4"></div>
<div class="a" style="left:644px;top:574px;width:131px;height:43px;background:#d0e0d3;z-index:4"></div>
<div class="a" style="left:961px;top:574px;width:135px;height:43px;background:#efdfc7;z-index:4"></div>
<div class="a" style="left:1118px;top:574px;width:122px;height:43px;background:#e9d0d3;z-index:4"></div>
<div class="a" style="left:1262px;top:574px;width:102px;height:43px;background:#c8def1;z-index:4"></div>
<div class="a" style="left:1386px;top:574px;width:106px;height:43px;background:#dddee3;z-index:4"></div>
<div class="a" style="top:586.48px;font-size:14.5px;line-height:18px;color:#111;z-index:4;white-space:nowrap;-webkit-text-stroke:0.52px currentColor;letter-spacing:0.3px;left:280px;">Nom</div>
<svg class="a" style="left:545px;top:587px;z-index:4;" width="14" height="14" viewBox="0 0 24 24"><path d="M6 6.5V16.5a3 3 0 0 0 6 0V8.5a3 3 0 0 1 6 0V17.5" fill="none" stroke="#27325e" stroke-width="2.4" stroke-linecap="round"/><circle cx="6" cy="5.2" r="2.7" fill="#27325e"/><circle cx="18" cy="18.6" r="2.7" fill="#27325e"/></svg>
<div class="a" style="top:586.48px;font-size:14.5px;line-height:18px;color:#111;z-index:4;white-space:nowrap;-webkit-text-stroke:0.52px currentColor;letter-spacing:0.3px;left:565.5px;">Total</div>
<svg class="a" style="left:629px;top:587px;z-index:4;" width="14" height="14" viewBox="0 0 14 14"><path d="M7 1.5V12 M2.8 7.8L7 12l4.2-4.2" fill="none" stroke="#222" stroke-width="1.4"/></svg>
<svg class="a" style="left:668px;top:588px;z-index:4;" width="15" height="15" viewBox="0 0 24 24"><circle cx="12" cy="12" r="9" fill="none" stroke="#4cc45f" stroke-width="2.2" stroke-dasharray="46 10" transform="rotate(-40 12 12)"/><path d="M7.5 12l3.2 3.2 7-7.2" fill="none" stroke="#4cc45f" stroke-width="2.4" stroke-linecap="round" stroke-linejoin="round"/></svg>
<div class="a" style="top:586.48px;font-size:14.5px;line-height:18px;color:#111;z-index:4;white-space:nowrap;-webkit-text-stroke:0.52px currentColor;letter-spacing:0.3px;left:688px;">Effectués</div>
<div class="a" style="top:586.48px;font-size:14.5px;line-height:18px;color:#111;z-index:4;white-space:nowrap;-webkit-text-stroke:0.52px currentColor;letter-spacing:0.3px;left:568px;width:600px;text-align:center;">Moy./passage</div>
<svg class="a" style="left:985px;top:588px;z-index:4;" width="15" height="15" viewBox="0 0 24 24"><path d="M19.4 10.5A7.8 7.8 0 1 0 18 17" fill="none" stroke="#f0a030" stroke-width="2.4" stroke-linecap="round"/><path d="M20.3 3.8v7h-7" fill="none" stroke="#f0a030" stroke-width="2.4" stroke-linecap="round" stroke-linejoin="round"/></svg>
<div class="a" style="top:586.48px;font-size:14.5px;line-height:18px;color:#111;z-index:4;white-space:nowrap;-webkit-text-stroke:0.52px currentColor;letter-spacing:0.3px;left:1005px;">À finaliser</div>
<svg class="a" style="left:1142px;top:588px;z-index:4;" width="15" height="15" viewBox="0 0 24 24"><circle cx="12" cy="12" r="8.6" fill="none" stroke="#e05a45" stroke-width="2.2"/><path d="M6 18L18 6" stroke="#e05a45" stroke-width="2.2"/></svg>
<div class="a" style="top:586.48px;font-size:14.5px;line-height:18px;color:#111;z-index:4;white-space:nowrap;-webkit-text-stroke:0.52px currentColor;letter-spacing:0.3px;left:1162px;">Refusés</div>
<svg class="a" style="left:1284px;top:586px;z-index:4;" width="17" height="17" viewBox="0 0 24 24"><path d="M2.8 11h3.2v9.3H2.8z M7 11.5l6 2v1.5H9.5l4 1 6.5-2 .3 1.5-7.3 4.8-6-1.5z M15.8 13L11.2 8.6A2.9 2.9 0 0 1 15.8 4.6 2.9 2.9 0 0 1 20.4 8.6z" fill="#3d8de6"/></svg>
<div class="a" style="top:586.48px;font-size:14.5px;line-height:18px;color:#111;z-index:4;white-space:nowrap;-webkit-text-stroke:0.52px currentColor;letter-spacing:0.3px;left:1306px;">Dons</div>
<svg class="a" style="left:1411px;top:588px;z-index:4;" width="15" height="15" viewBox="0 0 24 24"><path d="M3.5 12L12 4l8.5 8 M6 10.3V20h4.5v-5.5h3V20H18v-9.7" fill="none" stroke="#9a9a9a" stroke-width="2"/></svg>
<div class="a" style="top:586.48px;font-size:14.5px;line-height:18px;color:#111;z-index:4;white-space:nowrap;-webkit-text-stroke:0.52px currentColor;letter-spacing:0.3px;left:1430px;">Vides</div>
<div class="a" style="top:586.48px;font-size:14.5px;line-height:18px;color:#111;z-index:4;white-space:nowrap;-webkit-text-stroke:0.52px currentColor;letter-spacing:0.3px;left:1261px;width:600px;text-align:center;">Avancement</div>
<div class="a" style="top:586.48px;font-size:14.5px;line-height:18px;color:#111;z-index:4;white-space:nowrap;-webkit-text-stroke:0.52px currentColor;letter-spacing:0.3px;left:1420px;width:600px;text-align:center;">Secteurs</div>
<div class="a" style="left:276px;top:617px;width:1502px;height:41px;background:#e0e1e6;z-index:4"></div>
<div class="a" style="left:626px;top:617px;width:149px;height:41px;background:#c5d8c9;z-index:4"></div>
<div class="a" style="left:943px;top:617px;width:153px;height:41px;background:#e2d3bf;z-index:4"></div>
<div class="a" style="left:1100px;top:617px;width:140px;height:41px;background:#dfc2c5;z-index:4"></div>
<div class="a" style="left:1244px;top:617px;width:120px;height:41px;background:#b9d4e8;z-index:4"></div>
<div class="a" style="left:1368px;top:617px;width:124px;height:41px;background:#d3d4d9;z-index:4"></div>
<div class="a" style="top:627.56px;font-size:16px;line-height:20px;color:#111;z-index:4;white-space:nowrap;-webkit-text-stroke:0.58px currentColor;letter-spacing:0.3px;left:280px;">TOTAL</div>
<div class="a" style="top:628.10px;font-size:15px;line-height:19px;color:#111;z-index:4;white-space:nowrap;-webkit-text-stroke:0.54px currentColor;letter-spacing:0.1px;left:263px;width:600px;text-align:center;">3438</div>
<div class="a" style="top:620.28px;font-size:14.5px;line-height:18px;color:#111;z-index:4;white-space:nowrap;-webkit-text-stroke:0.52px currentColor;letter-spacing:0.1px;left:400.5px;width:600px;text-align:center;">23</div>
<div class="a" style="top:638.64px;font-size:12px;line-height:15px;color:#5a5a5a;z-index:4;white-space:nowrap;left:400.5px;width:600px;text-align:center;letter-spacing:.75px">(81.76€)</div>
<div class="a" style="top:628.10px;font-size:15px;line-height:19px;color:#111;z-index:4;white-space:nowrap;-webkit-text-stroke:0.54px currentColor;letter-spacing:0.1px;left:559px;width:600px;text-align:center;">3.55€</div>
<div class="a" style="top:628.10px;font-size:15px;line-height:19px;color:#111;z-index:4;white-space:nowrap;-webkit-text-stroke:0.54px currentColor;letter-spacing:0.1px;font-style:italic;left:719.5px;width:600px;text-align:center;">3415</div>
<div class="a" style="top:628.10px;font-size:15px;line-height:19px;color:#111;z-index:4;white-space:nowrap;-webkit-text-stroke:0.54px currentColor;letter-spacing:0px;left:870px;width:600px;text-align:center;">0</div>
<div class="a" style="top:628.10px;font-size:15px;line-height:19px;color:#111;z-index:4;white-space:nowrap;-webkit-text-stroke:0.54px currentColor;letter-spacing:0px;left:1004px;width:600px;text-align:center;">0</div>
<div class="a" style="top:628.10px;font-size:15px;line-height:19px;color:#111;z-index:4;white-space:nowrap;-webkit-text-stroke:0.54px currentColor;letter-spacing:0px;left:1130px;width:600px;text-align:center;">0</div>
<div class="a" style="left:1495px;top:635.5px;width:57px;height:4px;background:#e3e3e6;z-index:5"><div style="width:2px;height:4px;background:#a9c4e6"></div></div>
<div class="a" style="top:628.10px;font-size:15px;line-height:19px;color:#111;z-index:4;white-space:nowrap;-webkit-text-stroke:0.54px currentColor;letter-spacing:0.1px;right:205px;">0.7%</div>
<div class="a" style="top:628.10px;font-size:15px;line-height:19px;color:#111;z-index:4;white-space:nowrap;-webkit-text-stroke:0.54px currentColor;letter-spacing:0px;left:1411px;width:600px;text-align:center;">14</div>
<div class="a" style="left:276px;top:658px;width:1502px;height:42px;background:#ffffff;z-index:4"></div>
<div class="a" style="left:276px;top:700px;width:1502px;height:1px;background:#e9eceb;z-index:6"></div>
<div class="a" style="left:626px;top:658px;width:149px;height:42px;background:#eef6ec;z-index:4"></div>
<div class="a" style="left:943px;top:658px;width:153px;height:42px;background:#fdf5e6;z-index:4"></div>
<div class="a" style="left:1100px;top:658px;width:140px;height:42px;background:#fae9e9;z-index:4"></div>
<div class="a" style="left:1244px;top:658px;width:120px;height:42px;background:#e8f4fc;z-index:4"></div>
<div class="a" style="left:1368px;top:658px;width:124px;height:42px;background:#f3f3f3;z-index:4"></div>
<div class="a" style="top:668.36px;font-size:16px;line-height:20px;color:#111;z-index:4;white-space:nowrap;-webkit-text-stroke:0.58px currentColor;letter-spacing:0.3px;left:280px;">Cl</div>
<div class="a" style="left:299px;top:669.8px;width:136px;z-index:5"><div style="height:8px;background:linear-gradient(90deg,#f0f0f0 0px 8px,#d8d8d8 8px 16px,#b8b8b8 16px 24px,#c8c8c8 24px 32px,#c8c8c8 32px 40px,#c8c8c8 40px 48px,#c8c8c8 48px 56px,#c0c0c0 56px 64px,#d8d8d8 64px 72px,#b0b0b0 72px 80px,#d8d8d8 80px 88px,#d0d0d0 88px 96px,#c8c8c8 96px 104px,#d8d8d8 104px 112px,#b8b8b8 112px 120px,#a8a8a8 120px 128px,#d8d8d8 128px 136px)"></div><div style="height:8px;background:linear-gradient(90deg,#a8a8a8 0px 8px,#989898 8px 16px,#909090 16px 24px,#989898 24px 32px,#989898 32px 40px,#989898 40px 48px,#a8a8a8 48px 56px,#a0a0a0 56px 64px,#a0a0a0 64px 72px,#b0b0b0 72px 80px,#c8c8c8 80px 88px,#b0b0b0 88px 96px,#a0a0a0 96px 104px,#c8c8c8 104px 112px,#909090 112px 120px,#ececec 120px 128px,#989898 128px 136px)"></div></div>
<div class="a" style="top:668.90px;font-size:15px;line-height:19px;color:#111;z-index:4;white-space:nowrap;left:263px;width:600px;text-align:center;-webkit-text-stroke:.45px #111">2723</div>
<div class="a" style="top:661.58px;font-size:14.5px;line-height:18px;color:#111;z-index:4;white-space:nowrap;-webkit-text-stroke:0.52px currentColor;letter-spacing:0.1px;left:400.5px;width:600px;text-align:center;">21</div>
<div class="a" style="top:680.24px;font-size:12px;line-height:15px;color:#5a5a5a;z-index:4;white-space:nowrap;left:400.5px;width:600px;text-align:center;letter-spacing:.75px">(78.43€)</div>
<div class="a" style="top:668.90px;font-size:15px;line-height:19px;color:#111;z-index:4;white-space:nowrap;left:559px;width:600px;text-align:center;">3.73€</div>
<div class="a" style="top:668.90px;font-size:15px;line-height:19px;color:#222;z-index:4;white-space:nowrap;font-style:italic;left:719.5px;width:600px;text-align:center;">2702</div>
<div class="a" style="top:668.90px;font-size:15px;line-height:19px;color:#111;z-index:4;white-space:nowrap;left:870px;width:600px;text-align:center;">0</div>
<div class="a" style="top:668.90px;font-size:15px;line-height:19px;color:#111;z-index:4;white-space:nowrap;left:1004px;width:600px;text-align:center;">0</div>
<div class="a" style="top:668.90px;font-size:15px;line-height:19px;color:#111;z-index:4;white-space:nowrap;left:1130px;width:600px;text-align:center;">0</div>
<div class="a" style="left:1495px;top:676.3px;width:57px;height:4px;background:#dcdcdc;z-index:5"><div style="width:1.2px;height:4px;background:#3a7be0"></div></div>
<div class="a" style="top:668.90px;font-size:15px;line-height:19px;color:#111;z-index:4;white-space:nowrap;-webkit-text-stroke:0.45px currentColor;letter-spacing:0.1px;right:205px;">0.8%</div>
<div class="a" style="top:668.90px;font-size:15px;line-height:19px;color:#3d9a3d;z-index:4;white-space:nowrap;-webkit-text-stroke:0.54px currentColor;letter-spacing:0px;left:1653px;">7</div>
<svg class="a" style="left:1665px;top:671.3px;z-index:5;" width="14" height="15" viewBox="0 0 14 15"><path d="M1.5 3.2L5 1.8l4 1.4 3.5-1.4v10l-3.5 1.4-4-1.4-3.5 1.4z M5 1.8v10 M9 3.2v10" fill="none" stroke="#111" stroke-width="1.3" stroke-linejoin="round"/></svg>
<div class="a" style="left:276px;top:700px;width:1502px;height:42px;background:#fafafa;z-index:4"></div>
<div class="a" style="left:276px;top:742px;width:1502px;height:1px;background:#e9eceb;z-index:6"></div>
<div class="a" style="left:626px;top:700px;width:149px;height:42px;background:#e9f1e7;z-index:4"></div>
<div class="a" style="left:943px;top:700px;width:153px;height:42px;background:#f8efe1;z-index:4"></div>
<div class="a" style="left:1100px;top:700px;width:140px;height:42px;background:#f6e7e6;z-index:4"></div>
<div class="a" style="left:1244px;top:700px;width:120px;height:42px;background:#e4f0f9;z-index:4"></div>
<div class="a" style="left:1368px;top:700px;width:124px;height:42px;background:#f1f1f1;z-index:4"></div>
<div class="a" style="top:710.36px;font-size:16px;line-height:20px;color:#111;z-index:4;white-space:nowrap;-webkit-text-stroke:0.58px currentColor;letter-spacing:0.3px;left:280px;">Pie</div>
<div class="a" style="left:299px;top:711.8px;width:144px;z-index:5"><div style="height:8px;background:linear-gradient(90deg,#a8a8a8 0px 8px,#a8a8a8 8px 16px,#a8a8a8 16px 24px,#d8d8d8 24px 32px,#b8b8b8 32px 40px,#c8c8c8 40px 48px,#b8b8b8 48px 56px,#c0c0c0 56px 64px,#c8c8c8 64px 72px,#c8c8c8 72px 80px,#c8c8c8 80px 88px,#d0d0d0 88px 96px,#d8d8d8 96px 104px,#b0b0b0 104px 112px,#c8c8c8 112px 120px,#c8c8c8 120px 128px,#a8a8a8 128px 136px,#b8b8b8 136px 144px)"></div><div style="height:8px;background:linear-gradient(90deg,#a0a0a0 0px 8px,#f4f4f4 8px 16px,#b8b8b8 16px 24px,#989898 24px 32px,#f4f4f4 32px 40px,#909090 40px 48px,#a8a8a8 48px 56px,#909090 56px 64px,#989898 64px 72px,#a8a8a8 72px 80px,#989898 80px 88px,#f4f4f4 88px 96px,#a8a8a8 96px 104px,#c8c8c8 104px 112px,#909090 112px 120px,#989898 120px 128px,#a8a8a8 128px 136px,#989898 136px 144px)"></div></div>
<div class="a" style="top:710.90px;font-size:15px;line-height:19px;color:#111;z-index:4;white-space:nowrap;left:263px;width:600px;text-align:center;-webkit-text-stroke:.45px #111">64</div>
<div class="a" style="top:703.58px;font-size:14.5px;line-height:18px;color:#111;z-index:4;white-space:nowrap;-webkit-text-stroke:0.52px currentColor;letter-spacing:0.1px;left:400.5px;width:600px;text-align:center;">2</div>
<div class="a" style="top:722.24px;font-size:12px;line-height:15px;color:#5a5a5a;z-index:4;white-space:nowrap;left:400.5px;width:600px;text-align:center;letter-spacing:.75px">(3.33€)</div>
<div class="a" style="top:710.90px;font-size:15px;line-height:19px;color:#111;z-index:4;white-space:nowrap;left:559px;width:600px;text-align:center;">1.67€</div>
<div class="a" style="top:710.90px;font-size:15px;line-height:19px;color:#222;z-index:4;white-space:nowrap;font-style:italic;left:719.5px;width:600px;text-align:center;">62</div>
<div class="a" style="top:710.90px;font-size:15px;line-height:19px;color:#111;z-index:4;white-space:nowrap;left:870px;width:600px;text-align:center;">0</div>
<div class="a" style="top:710.90px;font-size:15px;line-height:19px;color:#111;z-index:4;white-space:nowrap;left:1004px;width:600px;text-align:center;">0</div>
<div class="a" style="top:710.90px;font-size:15px;line-height:19px;color:#111;z-index:4;white-space:nowrap;left:1130px;width:600px;text-align:center;">0</div>
<div class="a" style="left:1495px;top:718.3px;width:57px;height:4px;background:#dcdcdc;z-index:5"><div style="width:3.5px;height:4px;background:#3a7be0"></div></div>
<div class="a" style="top:710.90px;font-size:15px;line-height:19px;color:#111;z-index:4;white-space:nowrap;-webkit-text-stroke:0.45px currentColor;letter-spacing:0.1px;right:205px;">3.1%</div>
<div class="a" style="top:710.90px;font-size:15px;line-height:19px;color:#3d9a3d;z-index:4;white-space:nowrap;-webkit-text-stroke:0.54px currentColor;letter-spacing:0px;left:1653px;">1</div>
<svg class="a" style="left:1665px;top:713.3px;z-index:5;" width="14" height="15" viewBox="0 0 14 15"><path d="M1.5 3.2L5 1.8l4 1.4 3.5-1.4v10l-3.5 1.4-4-1.4-3.5 1.4z M5 1.8v10 M9 3.2v10" fill="none" stroke="#111" stroke-width="1.3" stroke-linejoin="round"/></svg>
<div class="a" style="left:276px;top:742px;width:1502px;height:42px;background:#ffffff;z-index:4"></div>
<div class="a" style="left:276px;top:784px;width:1502px;height:1px;background:#e9eceb;z-index:6"></div>
<div class="a" style="left:626px;top:742px;width:149px;height:42px;background:#eef6ec;z-index:4"></div>
<div class="a" style="left:943px;top:742px;width:153px;height:42px;background:#fdf5e6;z-index:4"></div>
<div class="a" style="left:1100px;top:742px;width:140px;height:42px;background:#fae9e9;z-index:4"></div>
<div class="a" style="left:1244px;top:742px;width:120px;height:42px;background:#e8f4fc;z-index:4"></div>
<div class="a" style="left:1368px;top:742px;width:124px;height:42px;background:#f3f3f3;z-index:4"></div>
<div class="a" style="top:752.36px;font-size:16px;line-height:20px;color:#111;z-index:4;white-space:nowrap;-webkit-text-stroke:0.58px currentColor;letter-spacing:0.3px;left:280px;">Pie</div>
<div class="a" style="left:299px;top:753.8px;width:136px;z-index:5"><div style="height:8px;background:linear-gradient(90deg,#d8d8d8 0px 8px,#c0c0c0 8px 16px,#a8a8a8 16px 24px,#a8a8a8 24px 32px,#b8b8b8 32px 40px,#c0c0c0 40px 48px,#d8d8d8 48px 56px,#d0d0d0 56px 64px,#d8d8d8 64px 72px,#d8d8d8 72px 80px,#c8c8c8 80px 88px,#c8c8c8 88px 96px,#b0b0b0 96px 104px,#c8c8c8 104px 112px,#d8d8d8 112px 120px,#a8a8a8 120px 128px,#b0b0b0 128px 136px)"></div><div style="height:8px;background:linear-gradient(90deg,#ececec 0px 8px,#b8b8b8 8px 16px,#a0a0a0 16px 24px,#c8c8c8 24px 32px,#989898 32px 40px,#989898 40px 48px,#a8a8a8 48px 56px,#a0a0a0 56px 64px,#a8a8a8 64px 72px,#b0b0b0 72px 80px,#b0b0b0 80px 88px,#b0b0b0 88px 96px,#989898 96px 104px,#989898 104px 112px,#989898 112px 120px,#b0b0b0 120px 128px,#c8c8c8 128px 136px)"></div></div>
<div class="a" style="top:752.90px;font-size:15px;line-height:19px;color:#111;z-index:4;white-space:nowrap;left:263px;width:600px;text-align:center;-webkit-text-stroke:.45px #111">0</div>
<div class="a" style="top:745.58px;font-size:14.5px;line-height:18px;color:#111;z-index:4;white-space:nowrap;-webkit-text-stroke:0.52px currentColor;letter-spacing:0.1px;left:400.5px;width:600px;text-align:center;">0</div>
<div class="a" style="top:764.24px;font-size:12px;line-height:15px;color:#5a5a5a;z-index:4;white-space:nowrap;left:400.5px;width:600px;text-align:center;letter-spacing:.75px">(0.00€)</div>
<div class="a" style="top:752.90px;font-size:15px;line-height:19px;color:#111;z-index:4;white-space:nowrap;left:559px;width:600px;text-align:center;">-</div>
<div class="a" style="top:752.90px;font-size:15px;line-height:19px;color:#222;z-index:4;white-space:nowrap;font-style:italic;left:719.5px;width:600px;text-align:center;">0</div>
<div class="a" style="top:752.90px;font-size:15px;line-height:19px;color:#111;z-index:4;white-space:nowrap;left:870px;width:600px;text-align:center;">0</div>
<div class="a" style="top:752.90px;font-size:15px;line-height:19px;color:#111;z-index:4;white-space:nowrap;left:1004px;width:600px;text-align:center;">0</div>
<div class="a" style="top:752.90px;font-size:15px;line-height:19px;color:#111;z-index:4;white-space:nowrap;left:1130px;width:600px;text-align:center;">0</div>
<div class="a" style="left:1495px;top:760.3px;width:57px;height:4px;background:#dcdcdc;z-index:5"><div style="width:0px;height:4px;background:#3a7be0"></div></div>
<div class="a" style="top:752.90px;font-size:15px;line-height:19px;color:#111;z-index:4;white-space:nowrap;-webkit-text-stroke:0.45px currentColor;letter-spacing:0.1px;right:205px;">0.0%</div>
<svg class="a" style="left:1649px;top:755.3px;z-index:5;" width="14" height="14" viewBox="0 0 14 14"><path d="M7 1.2L13.3 12.5H.7z" fill="#e0503a"/><path d="M7 5.2v3.6" stroke="#fff" stroke-width="1.4"/><circle cx="7" cy="10.5" r=".8" fill="#fff"/></svg>
<div class="a" style="top:752.90px;font-size:15px;line-height:19px;color:#d9402c;z-index:4;white-space:nowrap;left:1668px;">0</div>
<svg class="a" style="left:1682px;top:755.3px;z-index:5;" width="14" height="15" viewBox="0 0 14 15"><path d="M1.5 3.2L5 1.8l4 1.4 3.5-1.4v10l-3.5 1.4-4-1.4-3.5 1.4z M5 1.8v10 M9 3.2v10" fill="none" stroke="#111" stroke-width="1.3" stroke-linejoin="round"/></svg>
<div class="a" style="left:276px;top:784px;width:1502px;height:42px;background:#fafafa;z-index:4"></div>
<div class="a" style="left:276px;top:826px;width:1502px;height:1px;background:#e9eceb;z-index:6"></div>
<div class="a" style="left:626px;top:784px;width:149px;height:42px;background:#e9f1e7;z-index:4"></div>
<div class="a" style="left:943px;top:784px;width:153px;height:42px;background:#f8efe1;z-index:4"></div>
<div class="a" style="left:1100px;top:784px;width:140px;height:42px;background:#f6e7e6;z-index:4"></div>
<div class="a" style="left:1244px;top:784px;width:120px;height:42px;background:#e4f0f9;z-index:4"></div>
<div class="a" style="left:1368px;top:784px;width:124px;height:42px;background:#f1f1f1;z-index:4"></div>
<div class="a" style="top:794.36px;font-size:16px;line-height:20px;color:#111;z-index:4;white-space:nowrap;-webkit-text-stroke:0.58px currentColor;letter-spacing:0.3px;left:280px;">Pie</div>
<div class="a" style="left:299px;top:795.8px;width:88px;z-index:5"><div style="height:8px;background:linear-gradient(90deg,#b8b8b8 0px 8px,#c8c8c8 8px 16px,#d8d8d8 16px 24px,#c8c8c8 24px 32px,#fafafa 32px 40px,#c0c0c0 40px 48px,#c0c0c0 48px 56px,#c0c0c0 56px 64px,#c8c8c8 64px 72px,#c8c8c8 72px 80px,#c0c0c0 80px 88px)"></div><div style="height:8px;background:linear-gradient(90deg,#a0a0a0 0px 8px,#c8c8c8 8px 16px,#a0a0a0 16px 24px,#c8c8c8 24px 32px,#a8a8a8 32px 40px,#c8c8c8 40px 48px,#ececec 48px 56px,#909090 56px 64px,#989898 64px 72px,#989898 72px 80px,#989898 80px 88px)"></div></div>
<div class="a" style="top:794.90px;font-size:15px;line-height:19px;color:#111;z-index:4;white-space:nowrap;left:263px;width:600px;text-align:center;-webkit-text-stroke:.45px #111">38</div>
<div class="a" style="top:787.58px;font-size:14.5px;line-height:18px;color:#111;z-index:4;white-space:nowrap;-webkit-text-stroke:0.52px currentColor;letter-spacing:0.1px;left:400.5px;width:600px;text-align:center;">0</div>
<div class="a" style="top:806.24px;font-size:12px;line-height:15px;color:#5a5a5a;z-index:4;white-space:nowrap;left:400.5px;width:600px;text-align:center;letter-spacing:.75px">(0.00€)</div>
<div class="a" style="top:794.90px;font-size:15px;line-height:19px;color:#111;z-index:4;white-space:nowrap;left:559px;width:600px;text-align:center;">-</div>
<div class="a" style="top:794.90px;font-size:15px;line-height:19px;color:#222;z-index:4;white-space:nowrap;font-style:italic;left:719.5px;width:600px;text-align:center;">38</div>
<div class="a" style="top:794.90px;font-size:15px;line-height:19px;color:#111;z-index:4;white-space:nowrap;left:870px;width:600px;text-align:center;">0</div>
<div class="a" style="top:794.90px;font-size:15px;line-height:19px;color:#111;z-index:4;white-space:nowrap;left:1004px;width:600px;text-align:center;">0</div>
<div class="a" style="top:794.90px;font-size:15px;line-height:19px;color:#111;z-index:4;white-space:nowrap;left:1130px;width:600px;text-align:center;">0</div>
<div class="a" style="left:1495px;top:802.3px;width:57px;height:4px;background:#dcdcdc;z-index:5"><div style="width:0px;height:4px;background:#3a7be0"></div></div>
<div class="a" style="top:794.90px;font-size:15px;line-height:19px;color:#111;z-index:4;white-space:nowrap;-webkit-text-stroke:0.45px currentColor;letter-spacing:0.1px;right:205px;">0.0%</div>
<div class="a" style="top:794.90px;font-size:15px;line-height:19px;color:#3d9a3d;z-index:4;white-space:nowrap;-webkit-text-stroke:0.54px currentColor;letter-spacing:0px;left:1653px;">3</div>
<svg class="a" style="left:1665px;top:797.3px;z-index:5;" width="14" height="15" viewBox="0 0 14 15"><path d="M1.5 3.2L5 1.8l4 1.4 3.5-1.4v10l-3.5 1.4-4-1.4-3.5 1.4z M5 1.8v10 M9 3.2v10" fill="none" stroke="#111" stroke-width="1.3" stroke-linejoin="round"/></svg>
<div class="a" style="left:276px;top:826px;width:1502px;height:42px;background:#ffffff;z-index:4"></div>
<div class="a" style="left:276px;top:868px;width:1502px;height:1px;background:#e9eceb;z-index:6"></div>
<div class="a" style="left:626px;top:826px;width:149px;height:42px;background:#eef6ec;z-index:4"></div>
<div class="a" style="left:943px;top:826px;width:153px;height:42px;background:#fdf5e6;z-index:4"></div>
<div class="a" style="left:1100px;top:826px;width:140px;height:42px;background:#fae9e9;z-index:4"></div>
<div class="a" style="left:1244px;top:826px;width:120px;height:42px;background:#e8f4fc;z-index:4"></div>
<div class="a" style="left:1368px;top:826px;width:124px;height:42px;background:#f3f3f3;z-index:4"></div>
<div class="a" style="top:836.36px;font-size:16px;line-height:20px;color:#111;z-index:4;white-space:nowrap;-webkit-text-stroke:0.58px currentColor;letter-spacing:0.3px;left:280px;">AN</div>
<div class="a" style="left:299px;top:837.8px;width:88px;z-index:5"><div style="height:8px;background:linear-gradient(90deg,#a8a8a8 0px 8px,#fafafa 8px 16px,#c0c0c0 16px 24px,#c0c0c0 24px 32px,#b0b0b0 32px 40px,#f0f0f0 40px 48px,#d0d0d0 48px 56px,#b0b0b0 56px 64px,#c8c8c8 64px 72px,#a8a8a8 72px 80px,#d0d0d0 80px 88px)"></div><div style="height:8px;background:linear-gradient(90deg,#909090 0px 8px,#a8a8a8 8px 16px,#989898 16px 24px,#c8c8c8 24px 32px,#989898 32px 40px,#a0a0a0 40px 48px,#989898 48px 56px,#a0a0a0 56px 64px,#b8b8b8 64px 72px,#b0b0b0 72px 80px,#b0b0b0 80px 88px)"></div></div>
<div class="a" style="top:836.90px;font-size:15px;line-height:19px;color:#111;z-index:4;white-space:nowrap;left:263px;width:600px;text-align:center;-webkit-text-stroke:.45px #111">127</div>
<div class="a" style="top:829.58px;font-size:14.5px;line-height:18px;color:#111;z-index:4;white-space:nowrap;-webkit-text-stroke:0.52px currentColor;letter-spacing:0.1px;left:400.5px;width:600px;text-align:center;">0</div>
<div class="a" style="top:848.24px;font-size:12px;line-height:15px;color:#5a5a5a;z-index:4;white-space:nowrap;left:400.5px;width:600px;text-align:center;letter-spacing:.75px">(0.00€)</div>
<div class="a" style="top:836.90px;font-size:15px;line-height:19px;color:#111;z-index:4;white-space:nowrap;left:559px;width:600px;text-align:center;">-</div>
<div class="a" style="top:836.90px;font-size:15px;line-height:19px;color:#222;z-index:4;white-space:nowrap;font-style:italic;left:719.5px;width:600px;text-align:center;">127</div>
<div class="a" style="top:836.90px;font-size:15px;line-height:19px;color:#111;z-index:4;white-space:nowrap;left:870px;width:600px;text-align:center;">0</div>
<div class="a" style="top:836.90px;font-size:15px;line-height:19px;color:#111;z-index:4;white-space:nowrap;left:1004px;width:600px;text-align:center;">0</div>
<div class="a" style="top:836.90px;font-size:15px;line-height:19px;color:#111;z-index:4;white-space:nowrap;left:1130px;width:600px;text-align:center;">0</div>
<div class="a" style="left:1495px;top:844.3px;width:57px;height:4px;background:#dcdcdc;z-index:5"><div style="width:0px;height:4px;background:#3a7be0"></div></div>
<div class="a" style="top:836.90px;font-size:15px;line-height:19px;color:#111;z-index:4;white-space:nowrap;-webkit-text-stroke:0.45px currentColor;letter-spacing:0.1px;right:205px;">0.0%</div>
<div class="a" style="top:836.90px;font-size:15px;line-height:19px;color:#3d9a3d;z-index:4;white-space:nowrap;-webkit-text-stroke:0.54px currentColor;letter-spacing:0px;left:1653px;">2</div>
<svg class="a" style="left:1665px;top:839.3px;z-index:5;" width="14" height="15" viewBox="0 0 14 15"><path d="M1.5 3.2L5 1.8l4 1.4 3.5-1.4v10l-3.5 1.4-4-1.4-3.5 1.4z M5 1.8v10 M9 3.2v10" fill="none" stroke="#111" stroke-width="1.3" stroke-linejoin="round"/></svg>
<div class="a" style="left:276px;top:868px;width:1502px;height:42px;background:#fafafa;z-index:4"></div>
<div class="a" style="left:276px;top:910px;width:1502px;height:1px;background:#e9eceb;z-index:6"></div>
<div class="a" style="left:626px;top:868px;width:149px;height:42px;background:#e9f1e7;z-index:4"></div>
<div class="a" style="left:943px;top:868px;width:153px;height:42px;background:#f8efe1;z-index:4"></div>
<div class="a" style="left:1100px;top:868px;width:140px;height:42px;background:#f6e7e6;z-index:4"></div>
<div class="a" style="left:1244px;top:868px;width:120px;height:42px;background:#e4f0f9;z-index:4"></div>
<div class="a" style="left:1368px;top:868px;width:124px;height:42px;background:#f1f1f1;z-index:4"></div>
<div class="a" style="top:878.36px;font-size:16px;line-height:20px;color:#111;z-index:4;white-space:nowrap;-webkit-text-stroke:0.58px currentColor;letter-spacing:0.3px;left:280px;">All</div>
<div class="a" style="left:299px;top:879.8px;width:120px;z-index:5"><div style="height:8px;background:linear-gradient(90deg,#b8b8b8 0px 8px,#c8c8c8 8px 16px,#c0c0c0 16px 24px,#a8a8a8 24px 32px,#a8a8a8 32px 40px,#c0c0c0 40px 48px,#c8c8c8 48px 56px,#d8d8d8 56px 64px,#b0b0b0 64px 72px,#b8b8b8 72px 80px,#f0f0f0 80px 88px,#d0d0d0 88px 96px,#d0d0d0 96px 104px,#f0f0f0 104px 112px,#f0f0f0 112px 120px)"></div><div style="height:8px;background:linear-gradient(90deg,#909090 0px 8px,#f4f4f4 8px 16px,#989898 16px 24px,#b0b0b0 24px 32px,#a8a8a8 32px 40px,#909090 40px 48px,#b0b0b0 48px 56px,#989898 56px 64px,#909090 64px 72px,#a0a0a0 72px 80px,#a0a0a0 80px 88px,#a8a8a8 88px 96px,#909090 96px 104px,#989898 104px 112px,#a0a0a0 112px 120px)"></div></div>
<div class="a" style="top:878.90px;font-size:15px;line-height:19px;color:#111;z-index:4;white-space:nowrap;left:263px;width:600px;text-align:center;-webkit-text-stroke:.45px #111">0</div>
<div class="a" style="top:871.58px;font-size:14.5px;line-height:18px;color:#111;z-index:4;white-space:nowrap;-webkit-text-stroke:0.52px currentColor;letter-spacing:0.1px;left:400.5px;width:600px;text-align:center;">0</div>
<div class="a" style="top:890.24px;font-size:12px;line-height:15px;color:#5a5a5a;z-index:4;white-space:nowrap;left:400.5px;width:600px;text-align:center;letter-spacing:.75px">(0.00€)</div>
<div class="a" style="top:878.90px;font-size:15px;line-height:19px;color:#111;z-index:4;white-space:nowrap;left:559px;width:600px;text-align:center;">-</div>
<div class="a" style="top:878.90px;font-size:15px;line-height:19px;color:#222;z-index:4;white-space:nowrap;font-style:italic;left:719.5px;width:600px;text-align:center;">0</div>
<div class="a" style="top:878.90px;font-size:15px;line-height:19px;color:#111;z-index:4;white-space:nowrap;left:870px;width:600px;text-align:center;">0</div>
<div class="a" style="top:878.90px;font-size:15px;line-height:19px;color:#111;z-index:4;white-space:nowrap;left:1004px;width:600px;text-align:center;">0</div>
<div class="a" style="top:878.90px;font-size:15px;line-height:19px;color:#111;z-index:4;white-space:nowrap;left:1130px;width:600px;text-align:center;">0</div>
<div class="a" style="left:1495px;top:886.3px;width:57px;height:4px;background:#dcdcdc;z-index:5"><div style="width:0px;height:4px;background:#3a7be0"></div></div>
<div class="a" style="top:878.90px;font-size:15px;line-height:19px;color:#111;z-index:4;white-space:nowrap;-webkit-text-stroke:0.45px currentColor;letter-spacing:0.1px;right:205px;">0.0%</div>
<svg class="a" style="left:1649px;top:881.3px;z-index:5;" width="14" height="14" viewBox="0 0 14 14"><path d="M7 1.2L13.3 12.5H.7z" fill="#e0503a"/><path d="M7 5.2v3.6" stroke="#fff" stroke-width="1.4"/><circle cx="7" cy="10.5" r=".8" fill="#fff"/></svg>
<div class="a" style="top:878.90px;font-size:15px;line-height:19px;color:#d9402c;z-index:4;white-space:nowrap;left:1668px;">0</div>
<svg class="a" style="left:1682px;top:881.3px;z-index:5;" width="14" height="15" viewBox="0 0 14 15"><path d="M1.5 3.2L5 1.8l4 1.4 3.5-1.4v10l-3.5 1.4-4-1.4-3.5 1.4z M5 1.8v10 M9 3.2v10" fill="none" stroke="#111" stroke-width="1.3" stroke-linejoin="round"/></svg>
<div class="a" style="left:276px;top:910px;width:1502px;height:42px;background:#ffffff;z-index:4"></div>
<div class="a" style="left:276px;top:952px;width:1502px;height:1px;background:#e9eceb;z-index:6"></div>
<div class="a" style="left:626px;top:910px;width:149px;height:42px;background:#eef6ec;z-index:4"></div>
<div class="a" style="left:943px;top:910px;width:153px;height:42px;background:#fdf5e6;z-index:4"></div>
<div class="a" style="left:1100px;top:910px;width:140px;height:42px;background:#fae9e9;z-index:4"></div>
<div class="a" style="left:1244px;top:910px;width:120px;height:42px;background:#e8f4fc;z-index:4"></div>
<div class="a" style="left:1368px;top:910px;width:124px;height:42px;background:#f3f3f3;z-index:4"></div>
<div class="a" style="top:920.36px;font-size:16px;line-height:20px;color:#111;z-index:4;white-space:nowrap;-webkit-text-stroke:0.58px currentColor;letter-spacing:0.3px;left:280px;">Au</div>
<div class="a" style="left:299px;top:921.8px;width:120px;z-index:5"><div style="height:8px;background:linear-gradient(90deg,#d0d0d0 0px 8px,#d0d0d0 8px 16px,#f0f0f0 16px 24px,#b8b8b8 24px 32px,#d0d0d0 32px 40px,#a8a8a8 40px 48px,#d0d0d0 48px 56px,#c8c8c8 56px 64px,#c8c8c8 64px 72px,#d0d0d0 72px 80px,#c0c0c0 80px 88px,#c0c0c0 88px 96px,#b0b0b0 96px 104px,#f0f0f0 104px 112px,#c0c0c0 112px 120px)"></div><div style="height:8px;background:linear-gradient(90deg,#a0a0a0 0px 8px,#a0a0a0 8px 16px,#b8b8b8 16px 24px,#a8a8a8 24px 32px,#b8b8b8 32px 40px,#a8a8a8 40px 48px,#ececec 48px 56px,#c8c8c8 56px 64px,#c8c8c8 64px 72px,#b0b0b0 72px 80px,#909090 80px 88px,#f4f4f4 88px 96px,#a0a0a0 96px 104px,#b0b0b0 104px 112px,#b8b8b8 112px 120px)"></div></div>
<div class="a" style="top:920.90px;font-size:15px;line-height:19px;color:#111;z-index:4;white-space:nowrap;left:263px;width:600px;text-align:center;-webkit-text-stroke:.45px #111">0</div>
<div class="a" style="top:913.58px;font-size:14.5px;line-height:18px;color:#111;z-index:4;white-space:nowrap;-webkit-text-stroke:0.52px currentColor;letter-spacing:0.1px;left:400.5px;width:600px;text-align:center;">0</div>
<div class="a" style="top:932.24px;font-size:12px;line-height:15px;color:#5a5a5a;z-index:4;white-space:nowrap;left:400.5px;width:600px;text-align:center;letter-spacing:.75px">(0.00€)</div>
<div class="a" style="top:920.90px;font-size:15px;line-height:19px;color:#111;z-index:4;white-space:nowrap;left:559px;width:600px;text-align:center;">-</div>
<div class="a" style="top:920.90px;font-size:15px;line-height:19px;color:#222;z-index:4;white-space:nowrap;font-style:italic;left:719.5px;width:600px;text-align:center;">0</div>
<div class="a" style="top:920.90px;font-size:15px;line-height:19px;color:#111;z-index:4;white-space:nowrap;left:870px;width:600px;text-align:center;">0</div>
<div class="a" style="top:920.90px;font-size:15px;line-height:19px;color:#111;z-index:4;white-space:nowrap;left:1004px;width:600px;text-align:center;">0</div>
<div class="a" style="top:920.90px;font-size:15px;line-height:19px;color:#111;z-index:4;white-space:nowrap;left:1130px;width:600px;text-align:center;">0</div>
<div class="a" style="left:1495px;top:928.3px;width:57px;height:4px;background:#dcdcdc;z-index:5"><div style="width:0px;height:4px;background:#3a7be0"></div></div>
<div class="a" style="top:920.90px;font-size:15px;line-height:19px;color:#111;z-index:4;white-space:nowrap;-webkit-text-stroke:0.45px currentColor;letter-spacing:0.1px;right:205px;">0.0%</div>
<svg class="a" style="left:1649px;top:923.3px;z-index:5;" width="14" height="14" viewBox="0 0 14 14"><path d="M7 1.2L13.3 12.5H.7z" fill="#e0503a"/><path d="M7 5.2v3.6" stroke="#fff" stroke-width="1.4"/><circle cx="7" cy="10.5" r=".8" fill="#fff"/></svg>
<div class="a" style="top:920.90px;font-size:15px;line-height:19px;color:#d9402c;z-index:4;white-space:nowrap;left:1668px;">0</div>
<svg class="a" style="left:1682px;top:923.3px;z-index:5;" width="14" height="15" viewBox="0 0 14 15"><path d="M1.5 3.2L5 1.8l4 1.4 3.5-1.4v10l-3.5 1.4-4-1.4-3.5 1.4z M5 1.8v10 M9 3.2v10" fill="none" stroke="#111" stroke-width="1.3" stroke-linejoin="round"/></svg>
<div class="a" style="left:276px;top:952px;width:1502px;height:42px;background:#fafafa;z-index:4"></div>
<div class="a" style="left:276px;top:994px;width:1502px;height:1px;background:#e9eceb;z-index:6"></div>
<div class="a" style="left:626px;top:952px;width:149px;height:42px;background:#e9f1e7;z-index:4"></div>
<div class="a" style="left:943px;top:952px;width:153px;height:42px;background:#f8efe1;z-index:4"></div>
<div class="a" style="left:1100px;top:952px;width:140px;height:42px;background:#f6e7e6;z-index:4"></div>
<div class="a" style="left:1244px;top:952px;width:120px;height:42px;background:#e4f0f9;z-index:4"></div>
<div class="a" style="left:1368px;top:952px;width:124px;height:42px;background:#f1f1f1;z-index:4"></div>
<div class="a" style="top:962.36px;font-size:16px;line-height:20px;color:#111;z-index:4;white-space:nowrap;-webkit-text-stroke:0.58px currentColor;letter-spacing:0.3px;left:280px;">Gr</div>
<div class="a" style="left:299px;top:963.8px;width:112px;z-index:5"><div style="height:8px;background:linear-gradient(90deg,#d8d8d8 0px 8px,#fafafa 8px 16px,#b8b8b8 16px 24px,#c8c8c8 24px 32px,#c0c0c0 32px 40px,#d0d0d0 40px 48px,#c0c0c0 48px 56px,#a8a8a8 56px 64px,#c0c0c0 64px 72px,#c8c8c8 72px 80px,#fafafa 80px 88px,#b8b8b8 88px 96px,#f0f0f0 96px 104px,#b8b8b8 104px 112px)"></div><div style="height:8px;background:linear-gradient(90deg,#989898 0px 8px,#b0b0b0 8px 16px,#c8c8c8 16px 24px,#989898 24px 32px,#909090 32px 40px,#b8b8b8 40px 48px,#909090 48px 56px,#a8a8a8 56px 64px,#989898 64px 72px,#a8a8a8 72px 80px,#b0b0b0 80px 88px,#909090 88px 96px,#b0b0b0 96px 104px,#a0a0a0 104px 112px)"></div></div>
<div class="a" style="top:962.90px;font-size:15px;line-height:19px;color:#111;z-index:4;white-space:nowrap;left:263px;width:600px;text-align:center;-webkit-text-stroke:.45px #111">39</div>
<div class="a" style="top:955.58px;font-size:14.5px;line-height:18px;color:#111;z-index:4;white-space:nowrap;-webkit-text-stroke:0.52px currentColor;letter-spacing:0.1px;left:400.5px;width:600px;text-align:center;">0</div>
<div class="a" style="top:974.24px;font-size:12px;line-height:15px;color:#5a5a5a;z-index:4;white-space:nowrap;left:400.5px;width:600px;text-align:center;letter-spacing:.75px">(0.00€)</div>
<div class="a" style="top:962.90px;font-size:15px;line-height:19px;color:#111;z-index:4;white-space:nowrap;left:559px;width:600px;text-align:center;">-</div>
<div class="a" style="top:962.90px;font-size:15px;line-height:19px;color:#222;z-index:4;white-space:nowrap;font-style:italic;left:719.5px;width:600px;text-align:center;">39</div>
<div class="a" style="top:962.90px;font-size:15px;line-height:19px;color:#111;z-index:4;white-space:nowrap;left:870px;width:600px;text-align:center;">0</div>
<div class="a" style="top:962.90px;font-size:15px;line-height:19px;color:#111;z-index:4;white-space:nowrap;left:1004px;width:600px;text-align:center;">0</div>
<div class="a" style="top:962.90px;font-size:15px;line-height:19px;color:#111;z-index:4;white-space:nowrap;left:1130px;width:600px;text-align:center;">0</div>
<div class="a" style="left:1495px;top:970.3px;width:57px;height:4px;background:#dcdcdc;z-index:5"><div style="width:0px;height:4px;background:#3a7be0"></div></div>
<div class="a" style="top:962.90px;font-size:15px;line-height:19px;color:#111;z-index:4;white-space:nowrap;-webkit-text-stroke:0.45px currentColor;letter-spacing:0.1px;right:205px;">0.0%</div>
<div class="a" style="top:962.90px;font-size:15px;line-height:19px;color:#3d9a3d;z-index:4;white-space:nowrap;-webkit-text-stroke:0.54px currentColor;letter-spacing:0px;left:1653px;">1</div>
<svg class="a" style="left:1665px;top:965.3px;z-index:5;" width="14" height="15" viewBox="0 0 14 15"><path d="M1.5 3.2L5 1.8l4 1.4 3.5-1.4v10l-3.5 1.4-4-1.4-3.5 1.4z M5 1.8v10 M9 3.2v10" fill="none" stroke="#111" stroke-width="1.3" stroke-linejoin="round"/></svg>
<div class="a" style="left:276px;top:994px;width:1502px;height:42px;background:#ffffff;z-index:4"></div>
<div class="a" style="left:276px;top:1036px;width:1502px;height:1px;background:#e9eceb;z-index:6"></div>
<div class="a" style="left:626px;top:994px;width:149px;height:42px;background:#eef6ec;z-index:4"></div>
<div class="a" style="left:943px;top:994px;width:153px;height:42px;background:#fdf5e6;z-index:4"></div>
<div class="a" style="left:1100px;top:994px;width:140px;height:42px;background:#fae9e9;z-index:4"></div>
<div class="a" style="left:1244px;top:994px;width:120px;height:42px;background:#e8f4fc;z-index:4"></div>
<div class="a" style="left:1368px;top:994px;width:124px;height:42px;background:#f3f3f3;z-index:4"></div>
<div class="a" style="top:1004.36px;font-size:16px;line-height:20px;color:#111;z-index:4;white-space:nowrap;-webkit-text-stroke:0.58px currentColor;letter-spacing:0.3px;left:280px;">Pa</div>
<div class="a" style="left:299px;top:1005.8px;width:128px;z-index:5"><div style="height:8px;background:linear-gradient(90deg,#b8b8b8 0px 8px,#c8c8c8 8px 16px,#a8a8a8 16px 24px,#c8c8c8 24px 32px,#d0d0d0 32px 40px,#b8b8b8 40px 48px,#d0d0d0 48px 56px,#c8c8c8 56px 64px,#b0b0b0 64px 72px,#a8a8a8 72px 80px,#c8c8c8 80px 88px,#d0d0d0 88px 96px,#d0d0d0 96px 104px,#a8a8a8 104px 112px,#a8a8a8 112px 120px,#d8d8d8 120px 128px)"></div><div style="height:8px;background:linear-gradient(90deg,#b8b8b8 0px 8px,#c8c8c8 8px 16px,#b8b8b8 16px 24px,#a0a0a0 24px 32px,#ececec 32px 40px,#b0b0b0 40px 48px,#c8c8c8 48px 56px,#b8b8b8 56px 64px,#b8b8b8 64px 72px,#b8b8b8 72px 80px,#a0a0a0 80px 88px,#989898 88px 96px,#a0a0a0 96px 104px,#ececec 104px 112px,#909090 112px 120px,#909090 120px 128px)"></div></div>
<div class="a" style="top:1004.90px;font-size:15px;line-height:19px;color:#111;z-index:4;white-space:nowrap;left:263px;width:600px;text-align:center;-webkit-text-stroke:.45px #111">0</div>
<div class="a" style="top:997.58px;font-size:14.5px;line-height:18px;color:#111;z-index:4;white-space:nowrap;-webkit-text-stroke:0.52px currentColor;letter-spacing:0.1px;left:400.5px;width:600px;text-align:center;">0</div>
<div class="a" style="top:1016.24px;font-size:12px;line-height:15px;color:#5a5a5a;z-index:4;white-space:nowrap;left:400.5px;width:600px;text-align:center;letter-spacing:.75px">(0.00€)</div>
<div class="a" style="top:1004.90px;font-size:15px;line-height:19px;color:#111;z-index:4;white-space:nowrap;left:559px;width:600px;text-align:center;">-</div>
<div class="a" style="top:1004.90px;font-size:15px;line-height:19px;color:#222;z-index:4;white-space:nowrap;font-style:italic;left:719.5px;width:600px;text-align:center;">0</div>
<div class="a" style="top:1004.90px;font-size:15px;line-height:19px;color:#111;z-index:4;white-space:nowrap;left:870px;width:600px;text-align:center;">0</div>
<div class="a" style="top:1004.90px;font-size:15px;line-height:19px;color:#111;z-index:4;white-space:nowrap;left:1004px;width:600px;text-align:center;">0</div>
<div class="a" style="top:1004.90px;font-size:15px;line-height:19px;color:#111;z-index:4;white-space:nowrap;left:1130px;width:600px;text-align:center;">0</div>
<div class="a" style="left:1495px;top:1012.3px;width:57px;height:4px;background:#dcdcdc;z-index:5"><div style="width:0px;height:4px;background:#3a7be0"></div></div>
<div class="a" style="top:1004.90px;font-size:15px;line-height:19px;color:#111;z-index:4;white-space:nowrap;-webkit-text-stroke:0.45px currentColor;letter-spacing:0.1px;right:205px;">0.0%</div>
<svg class="a" style="left:1649px;top:1007.3px;z-index:5;" width="14" height="14" viewBox="0 0 14 14"><path d="M7 1.2L13.3 12.5H.7z" fill="#e0503a"/><path d="M7 5.2v3.6" stroke="#fff" stroke-width="1.4"/><circle cx="7" cy="10.5" r=".8" fill="#fff"/></svg>
<div class="a" style="top:1004.90px;font-size:15px;line-height:19px;color:#d9402c;z-index:4;white-space:nowrap;left:1668px;">0</div>
<svg class="a" style="left:1682px;top:1007.3px;z-index:5;" width="14" height="15" viewBox="0 0 14 15"><path d="M1.5 3.2L5 1.8l4 1.4 3.5-1.4v10l-3.5 1.4-4-1.4-3.5 1.4z M5 1.8v10 M9 3.2v10" fill="none" stroke="#111" stroke-width="1.3" stroke-linejoin="round"/></svg>
<div class="a" style="left:276px;top:1036px;width:1502px;height:42px;background:#fafafa;z-index:4"></div>
<div class="a" style="left:276px;top:1078px;width:1502px;height:1px;background:#e9eceb;z-index:6"></div>
<div class="a" style="left:626px;top:1036px;width:149px;height:42px;background:#e9f1e7;z-index:4"></div>
<div class="a" style="left:943px;top:1036px;width:153px;height:42px;background:#f8efe1;z-index:4"></div>
<div class="a" style="left:1100px;top:1036px;width:140px;height:42px;background:#f6e7e6;z-index:4"></div>
<div class="a" style="left:1244px;top:1036px;width:120px;height:42px;background:#e4f0f9;z-index:4"></div>
<div class="a" style="left:1368px;top:1036px;width:124px;height:42px;background:#f1f1f1;z-index:4"></div>
<div class="a" style="top:1046.36px;font-size:16px;line-height:20px;color:#111;z-index:4;white-space:nowrap;-webkit-text-stroke:0.58px currentColor;letter-spacing:0.3px;left:280px;">Pie</div>
<div class="a" style="left:299px;top:1047.8px;width:144px;z-index:5"><div style="height:8px;background:linear-gradient(90deg,#b0b0b0 0px 8px,#b8b8b8 8px 16px,#d0d0d0 16px 24px,#b8b8b8 24px 32px,#b0b0b0 32px 40px,#d0d0d0 40px 48px,#d8d8d8 48px 56px,#c8c8c8 56px 64px,#c8c8c8 64px 72px,#c0c0c0 72px 80px,#c0c0c0 80px 88px,#d0d0d0 88px 96px,#d0d0d0 96px 104px,#c8c8c8 104px 112px,#c8c8c8 112px 120px,#d8d8d8 120px 128px,#c8c8c8 128px 136px,#d8d8d8 136px 144px)"></div><div style="height:8px;background:linear-gradient(90deg,#989898 0px 8px,#b0b0b0 8px 16px,#b8b8b8 16px 24px,#989898 24px 32px,#b8b8b8 32px 40px,#a8a8a8 40px 48px,#b0b0b0 48px 56px,#989898 56px 64px,#f4f4f4 64px 72px,#b8b8b8 72px 80px,#a8a8a8 80px 88px,#b8b8b8 88px 96px,#909090 96px 104px,#a0a0a0 104px 112px,#c8c8c8 112px 120px,#c8c8c8 120px 128px,#a0a0a0 128px 136px,#b0b0b0 136px 144px)"></div></div>
<div class="a" style="top:1046.90px;font-size:15px;line-height:19px;color:#111;z-index:4;white-space:nowrap;left:263px;width:600px;text-align:center;-webkit-text-stroke:.45px #111">159</div>
<div class="a" style="top:1039.58px;font-size:14.5px;line-height:18px;color:#111;z-index:4;white-space:nowrap;-webkit-text-stroke:0.52px currentColor;letter-spacing:0.1px;left:400.5px;width:600px;text-align:center;">0</div>
<div class="a" style="top:1058.24px;font-size:12px;line-height:15px;color:#5a5a5a;z-index:4;white-space:nowrap;left:400.5px;width:600px;text-align:center;letter-spacing:.75px">(0.00€)</div>
<div class="a" style="top:1046.90px;font-size:15px;line-height:19px;color:#111;z-index:4;white-space:nowrap;left:559px;width:600px;text-align:center;">-</div>
<div class="a" style="top:1046.90px;font-size:15px;line-height:19px;color:#222;z-index:4;white-space:nowrap;font-style:italic;left:719.5px;width:600px;text-align:center;">159</div>
<div class="a" style="top:1046.90px;font-size:15px;line-height:19px;color:#111;z-index:4;white-space:nowrap;left:870px;width:600px;text-align:center;">0</div>
<div class="a" style="top:1046.90px;font-size:15px;line-height:19px;color:#111;z-index:4;white-space:nowrap;left:1004px;width:600px;text-align:center;">0</div>
<div class="a" style="top:1046.90px;font-size:15px;line-height:19px;color:#111;z-index:4;white-space:nowrap;left:1130px;width:600px;text-align:center;">0</div>
<div class="a" style="left:1495px;top:1054.3px;width:57px;height:4px;background:#dcdcdc;z-index:5"><div style="width:0px;height:4px;background:#3a7be0"></div></div>
<div class="a" style="top:1046.90px;font-size:15px;line-height:19px;color:#111;z-index:4;white-space:nowrap;-webkit-text-stroke:0.45px currentColor;letter-spacing:0.1px;right:205px;">0.0%</div>
<div class="a" style="top:1046.90px;font-size:15px;line-height:19px;color:#3d9a3d;z-index:4;white-space:nowrap;-webkit-text-stroke:0.54px currentColor;letter-spacing:0px;left:1653px;">1</div>
<svg class="a" style="left:1665px;top:1049.3px;z-index:5;" width="14" height="15" viewBox="0 0 14 15"><path d="M1.5 3.2L5 1.8l4 1.4 3.5-1.4v10l-3.5 1.4-4-1.4-3.5 1.4z M5 1.8v10 M9 3.2v10" fill="none" stroke="#111" stroke-width="1.3" stroke-linejoin="round"/></svg>
<div class="a" style="left:276px;top:1078px;width:1502px;height:42px;background:#ffffff;z-index:4"></div>
<div class="a" style="left:276px;top:1120px;width:1502px;height:1px;background:#e9eceb;z-index:6"></div>
<div class="a" style="left:626px;top:1078px;width:149px;height:42px;background:#eef6ec;z-index:4"></div>
<div class="a" style="left:943px;top:1078px;width:153px;height:42px;background:#fdf5e6;z-index:4"></div>
<div class="a" style="left:1100px;top:1078px;width:140px;height:42px;background:#fae9e9;z-index:4"></div>
<div class="a" style="left:1244px;top:1078px;width:120px;height:42px;background:#e8f4fc;z-index:4"></div>
<div class="a" style="left:1368px;top:1078px;width:124px;height:42px;background:#f3f3f3;z-index:4"></div>
<div class="a" style="top:1088.36px;font-size:16px;line-height:20px;color:#111;z-index:4;white-space:nowrap;-webkit-text-stroke:0.58px currentColor;letter-spacing:0.3px;left:280px;">ES</div>
<div class="a" style="left:299px;top:1089.8px;width:96px;z-index:5"><div style="height:8px;background:linear-gradient(90deg,#c8c8c8 0px 8px,#c8c8c8 8px 16px,#b0b0b0 16px 24px,#c0c0c0 24px 32px,#c8c8c8 32px 40px,#d0d0d0 40px 48px,#a8a8a8 48px 56px,#a8a8a8 56px 64px,#c0c0c0 64px 72px,#f0f0f0 72px 80px,#c8c8c8 80px 88px,#c0c0c0 88px 96px)"></div><div style="height:8px;background:linear-gradient(90deg,#989898 0px 8px,#b0b0b0 8px 16px,#c8c8c8 16px 24px,#b0b0b0 24px 32px,#909090 32px 40px,#989898 40px 48px,#f4f4f4 48px 56px,#c8c8c8 56px 64px,#a8a8a8 64px 72px,#a0a0a0 72px 80px,#989898 80px 88px,#b8b8b8 88px 96px)"></div></div>
<div class="a" style="top:1088.90px;font-size:15px;line-height:19px;color:#111;z-index:4;white-space:nowrap;left:263px;width:600px;text-align:center;-webkit-text-stroke:.45px #111">288</div>
<div class="a" style="top:1081.58px;font-size:14.5px;line-height:18px;color:#111;z-index:4;white-space:nowrap;-webkit-text-stroke:0.52px currentColor;letter-spacing:0.1px;left:400.5px;width:600px;text-align:center;">0</div>
<div class="a" style="top:1100.24px;font-size:12px;line-height:15px;color:#5a5a5a;z-index:4;white-space:nowrap;left:400.5px;width:600px;text-align:center;letter-spacing:.75px">(0.00€)</div>
<div class="a" style="top:1088.90px;font-size:15px;line-height:19px;color:#111;z-index:4;white-space:nowrap;left:559px;width:600px;text-align:center;">-</div>
<div class="a" style="top:1088.90px;font-size:15px;line-height:19px;color:#222;z-index:4;white-space:nowrap;font-style:italic;left:719.5px;width:600px;text-align:center;">288</div>
<div class="a" style="top:1088.90px;font-size:15px;line-height:19px;color:#111;z-index:4;white-space:nowrap;left:870px;width:600px;text-align:center;">0</div>
<div class="a" style="top:1088.90px;font-size:15px;line-height:19px;color:#111;z-index:4;white-space:nowrap;left:1004px;width:600px;text-align:center;">0</div>
<div class="a" style="top:1088.90px;font-size:15px;line-height:19px;color:#111;z-index:4;white-space:nowrap;left:1130px;width:600px;text-align:center;">0</div>
<div class="a" style="left:1495px;top:1096.3px;width:57px;height:4px;background:#dcdcdc;z-index:5"><div style="width:0px;height:4px;background:#3a7be0"></div></div>
<div class="a" style="top:1088.90px;font-size:15px;line-height:19px;color:#111;z-index:4;white-space:nowrap;-webkit-text-stroke:0.45px currentColor;letter-spacing:0.1px;right:205px;">0.0%</div>
<div class="a" style="top:1088.90px;font-size:15px;line-height:19px;color:#3d9a3d;z-index:4;white-space:nowrap;-webkit-text-stroke:0.54px currentColor;letter-spacing:0px;left:1653px;">1</div>
<svg class="a" style="left:1665px;top:1091.3px;z-index:5;" width="14" height="15" viewBox="0 0 14 15"><path d="M1.5 3.2L5 1.8l4 1.4 3.5-1.4v10l-3.5 1.4-4-1.4-3.5 1.4z M5 1.8v10 M9 3.2v10" fill="none" stroke="#111" stroke-width="1.3" stroke-linejoin="round"/></svg>
<div class="a" style="left:276px;top:1120px;width:1502px;height:42px;background:#fafafa;z-index:4"></div>
<div class="a" style="left:276px;top:1162px;width:1502px;height:1px;background:#e9eceb;z-index:6"></div>
<div class="a" style="left:626px;top:1120px;width:149px;height:42px;background:#e9f1e7;z-index:4"></div>
<div class="a" style="left:943px;top:1120px;width:153px;height:42px;background:#f8efe1;z-index:4"></div>
<div class="a" style="left:1100px;top:1120px;width:140px;height:42px;background:#f6e7e6;z-index:4"></div>
<div class="a" style="left:1244px;top:1120px;width:120px;height:42px;background:#e4f0f9;z-index:4"></div>
<div class="a" style="left:1368px;top:1120px;width:124px;height:42px;background:#f1f1f1;z-index:4"></div>
<div class="a" style="top:1130.36px;font-size:16px;line-height:20px;color:#111;z-index:4;white-space:nowrap;-webkit-text-stroke:0.58px currentColor;letter-spacing:0.3px;left:280px;">ES</div>
<div class="a" style="left:299px;top:1131.8px;width:96px;z-index:5"><div style="height:8px;background:linear-gradient(90deg,#b8b8b8 0px 8px,#c8c8c8 8px 16px,#d0d0d0 16px 24px,#fafafa 24px 32px,#d0d0d0 32px 40px,#c8c8c8 40px 48px,#d8d8d8 48px 56px,#c8c8c8 56px 64px,#d0d0d0 64px 72px,#d0d0d0 72px 80px,#d0d0d0 80px 88px,#c0c0c0 88px 96px)"></div><div style="height:8px;background:linear-gradient(90deg,#ececec 0px 8px,#f4f4f4 8px 16px,#989898 16px 24px,#b0b0b0 24px 32px,#f4f4f4 32px 40px,#a0a0a0 40px 48px,#b0b0b0 48px 56px,#989898 56px 64px,#a0a0a0 64px 72px,#b0b0b0 72px 80px,#a0a0a0 80px 88px,#b0b0b0 88px 96px)"></div></div>
<div class="a" style="top:1130.90px;font-size:15px;line-height:19px;color:#111;z-index:4;white-space:nowrap;left:263px;width:600px;text-align:center;-webkit-text-stroke:.45px #111">0</div>
<div class="a" style="top:1123.58px;font-size:14.5px;line-height:18px;color:#111;z-index:4;white-space:nowrap;-webkit-text-stroke:0.52px currentColor;letter-spacing:0.1px;left:400.5px;width:600px;text-align:center;">0</div>
<div class="a" style="top:1142.24px;font-size:12px;line-height:15px;color:#5a5a5a;z-index:4;white-space:nowrap;left:400.5px;width:600px;text-align:center;letter-spacing:.75px">(0.00€)</div>
<div class="a" style="top:1130.90px;font-size:15px;line-height:19px;color:#111;z-index:4;white-space:nowrap;left:559px;width:600px;text-align:center;">-</div>
<div class="a" style="top:1130.90px;font-size:15px;line-height:19px;color:#222;z-index:4;white-space:nowrap;font-style:italic;left:719.5px;width:600px;text-align:center;">0</div>
<div class="a" style="top:1130.90px;font-size:15px;line-height:19px;color:#111;z-index:4;white-space:nowrap;left:870px;width:600px;text-align:center;">0</div>
<div class="a" style="top:1130.90px;font-size:15px;line-height:19px;color:#111;z-index:4;white-space:nowrap;left:1004px;width:600px;text-align:center;">0</div>
<div class="a" style="top:1130.90px;font-size:15px;line-height:19px;color:#111;z-index:4;white-space:nowrap;left:1130px;width:600px;text-align:center;">0</div>
<div class="a" style="left:1495px;top:1138.3px;width:57px;height:4px;background:#dcdcdc;z-index:5"><div style="width:0px;height:4px;background:#3a7be0"></div></div>
<div class="a" style="top:1130.90px;font-size:15px;line-height:19px;color:#111;z-index:4;white-space:nowrap;-webkit-text-stroke:0.45px currentColor;letter-spacing:0.1px;right:205px;">0.0%</div>
<svg class="a" style="left:1649px;top:1133.3px;z-index:5;" width="14" height="14" viewBox="0 0 14 14"><path d="M7 1.2L13.3 12.5H.7z" fill="#e0503a"/><path d="M7 5.2v3.6" stroke="#fff" stroke-width="1.4"/><circle cx="7" cy="10.5" r=".8" fill="#fff"/></svg>
<div class="a" style="top:1130.90px;font-size:15px;line-height:19px;color:#d9402c;z-index:4;white-space:nowrap;left:1668px;">0</div>
<svg class="a" style="left:1682px;top:1133.3px;z-index:5;" width="14" height="15" viewBox="0 0 14 15"><path d="M1.5 3.2L5 1.8l4 1.4 3.5-1.4v10l-3.5 1.4-4-1.4-3.5 1.4z M5 1.8v10 M9 3.2v10" fill="none" stroke="#111" stroke-width="1.3" stroke-linejoin="round"/></svg>
<div class="a" style="left:276px;top:1162px;width:1502px;height:42px;background:#ffffff;z-index:4"></div>
<div class="a" style="left:276px;top:1204px;width:1502px;height:1px;background:#e9eceb;z-index:6"></div>
<div class="a" style="left:626px;top:1162px;width:149px;height:42px;background:#eef6ec;z-index:4"></div>
<div class="a" style="left:943px;top:1162px;width:153px;height:42px;background:#fdf5e6;z-index:4"></div>
<div class="a" style="left:1100px;top:1162px;width:140px;height:42px;background:#fae9e9;z-index:4"></div>
<div class="a" style="left:1244px;top:1162px;width:120px;height:42px;background:#e8f4fc;z-index:4"></div>
<div class="a" style="left:1368px;top:1162px;width:124px;height:42px;background:#f3f3f3;z-index:4"></div>
<div class="a" style="top:1172.36px;font-size:16px;line-height:20px;color:#111;z-index:4;white-space:nowrap;-webkit-text-stroke:0.58px currentColor;letter-spacing:0.3px;left:280px;">HE</div>
<div class="a" style="left:299px;top:1173.8px;width:120px;z-index:5"><div style="height:8px;background:linear-gradient(90deg,#f0f0f0 0px 8px,#c0c0c0 8px 16px,#a8a8a8 16px 24px,#c0c0c0 24px 32px,#a8a8a8 32px 40px,#d8d8d8 40px 48px,#b8b8b8 48px 56px,#b8b8b8 56px 64px,#d0d0d0 64px 72px,#c8c8c8 72px 80px,#d8d8d8 80px 88px,#c8c8c8 88px 96px,#b0b0b0 96px 104px,#b0b0b0 104px 112px,#d8d8d8 112px 120px)"></div><div style="height:8px;background:linear-gradient(90deg,#a8a8a8 0px 8px,#ececec 8px 16px,#989898 16px 24px,#989898 24px 32px,#989898 32px 40px,#989898 40px 48px,#b8b8b8 48px 56px,#b0b0b0 56px 64px,#909090 64px 72px,#989898 72px 80px,#989898 80px 88px,#b0b0b0 88px 96px,#ececec 96px 104px,#b8b8b8 104px 112px,#989898 112px 120px)"></div></div>
<div class="a" style="top:1172.90px;font-size:15px;line-height:19px;color:#111;z-index:4;white-space:nowrap;left:263px;width:600px;text-align:center;-webkit-text-stroke:.45px #111">0</div>
<div class="a" style="top:1165.58px;font-size:14.5px;line-height:18px;color:#111;z-index:4;white-space:nowrap;-webkit-text-stroke:0.52px currentColor;letter-spacing:0.1px;left:400.5px;width:600px;text-align:center;">0</div>
<div class="a" style="top:1184.24px;font-size:12px;line-height:15px;color:#5a5a5a;z-index:4;white-space:nowrap;left:400.5px;width:600px;text-align:center;letter-spacing:.75px">(0.00€)</div>
<div class="a" style="top:1172.90px;font-size:15px;line-height:19px;color:#111;z-index:4;white-space:nowrap;left:559px;width:600px;text-align:center;">-</div>
<div class="a" style="top:1172.90px;font-size:15px;line-height:19px;color:#222;z-index:4;white-space:nowrap;font-style:italic;left:719.5px;width:600px;text-align:center;">0</div>
<div class="a" style="top:1172.90px;font-size:15px;line-height:19px;color:#111;z-index:4;white-space:nowrap;left:870px;width:600px;text-align:center;">0</div>
<div class="a" style="top:1172.90px;font-size:15px;line-height:19px;color:#111;z-index:4;white-space:nowrap;left:1004px;width:600px;text-align:center;">0</div>
<div class="a" style="top:1172.90px;font-size:15px;line-height:19px;color:#111;z-index:4;white-space:nowrap;left:1130px;width:600px;text-align:center;">0</div>
<div class="a" style="left:1495px;top:1180.3px;width:57px;height:4px;background:#dcdcdc;z-index:5"><div style="width:0px;height:4px;background:#3a7be0"></div></div>
<div class="a" style="top:1172.90px;font-size:15px;line-height:19px;color:#111;z-index:4;white-space:nowrap;-webkit-text-stroke:0.45px currentColor;letter-spacing:0.1px;right:205px;">0.0%</div>
<svg class="a" style="left:1649px;top:1175.3px;z-index:5;" width="14" height="14" viewBox="0 0 14 14"><path d="M7 1.2L13.3 12.5H.7z" fill="#e0503a"/><path d="M7 5.2v3.6" stroke="#fff" stroke-width="1.4"/><circle cx="7" cy="10.5" r=".8" fill="#fff"/></svg>
<div class="a" style="top:1172.90px;font-size:15px;line-height:19px;color:#d9402c;z-index:4;white-space:nowrap;left:1668px;">0</div>
<svg class="a" style="left:1682px;top:1175.3px;z-index:5;" width="14" height="15" viewBox="0 0 14 15"><path d="M1.5 3.2L5 1.8l4 1.4 3.5-1.4v10l-3.5 1.4-4-1.4-3.5 1.4z M5 1.8v10 M9 3.2v10" fill="none" stroke="#111" stroke-width="1.3" stroke-linejoin="round"/></svg>
<div class="a" style="left:276px;top:1204px;width:1502px;height:42px;background:#fafafa;z-index:4"></div>
<div class="a" style="left:276px;top:1246px;width:1502px;height:1px;background:#e9eceb;z-index:6"></div>
<div class="a" style="left:626px;top:1204px;width:149px;height:42px;background:#e9f1e7;z-index:4"></div>
<div class="a" style="left:943px;top:1204px;width:153px;height:42px;background:#f8efe1;z-index:4"></div>
<div class="a" style="left:1100px;top:1204px;width:140px;height:42px;background:#f6e7e6;z-index:4"></div>
<div class="a" style="left:1244px;top:1204px;width:120px;height:42px;background:#e4f0f9;z-index:4"></div>
<div class="a" style="left:1368px;top:1204px;width:124px;height:42px;background:#f1f1f1;z-index:4"></div>
<div class="a" style="top:1214.36px;font-size:16px;line-height:20px;color:#111;z-index:4;white-space:nowrap;-webkit-text-stroke:0.58px currentColor;letter-spacing:0.3px;left:280px;">CL</div>
<div class="a" style="left:299px;top:1215.8px;width:152px;z-index:5"><div style="height:8px;background:linear-gradient(90deg,#b0b0b0 0px 8px,#f0f0f0 8px 16px,#b8b8b8 16px 24px,#c8c8c8 24px 32px,#c0c0c0 32px 40px,#d0d0d0 40px 48px,#d8d8d8 48px 56px,#b8b8b8 56px 64px,#c8c8c8 64px 72px,#d8d8d8 72px 80px,#b8b8b8 80px 88px,#c8c8c8 88px 96px,#c0c0c0 96px 104px,#c8c8c8 104px 112px,#d0d0d0 112px 120px,#c8c8c8 120px 128px,#c0c0c0 128px 136px,#d8d8d8 136px 144px,#c8c8c8 144px 152px)"></div><div style="height:8px;background:linear-gradient(90deg,#b8b8b8 0px 8px,#ececec 8px 16px,#c8c8c8 16px 24px,#b8b8b8 24px 32px,#c8c8c8 32px 40px,#a8a8a8 40px 48px,#c8c8c8 48px 56px,#b0b0b0 56px 64px,#a0a0a0 64px 72px,#a8a8a8 72px 80px,#b8b8b8 80px 88px,#c8c8c8 88px 96px,#b0b0b0 96px 104px,#a0a0a0 104px 112px,#b8b8b8 112px 120px,#c8c8c8 120px 128px,#b8b8b8 128px 136px,#a0a0a0 136px 144px,#a0a0a0 144px 152px)"></div></div>
<div class="a" style="top:1214.90px;font-size:15px;line-height:19px;color:#111;z-index:4;white-space:nowrap;left:263px;width:600px;text-align:center;-webkit-text-stroke:.45px #111">0</div>
<div class="a" style="top:1207.58px;font-size:14.5px;line-height:18px;color:#111;z-index:4;white-space:nowrap;-webkit-text-stroke:0.52px currentColor;letter-spacing:0.1px;left:400.5px;width:600px;text-align:center;">0</div>
<div class="a" style="top:1226.24px;font-size:12px;line-height:15px;color:#5a5a5a;z-index:4;white-space:nowrap;left:400.5px;width:600px;text-align:center;letter-spacing:.75px">(0.00€)</div>
<div class="a" style="top:1214.90px;font-size:15px;line-height:19px;color:#111;z-index:4;white-space:nowrap;left:559px;width:600px;text-align:center;">-</div>
<div class="a" style="top:1214.90px;font-size:15px;line-height:19px;color:#222;z-index:4;white-space:nowrap;font-style:italic;left:719.5px;width:600px;text-align:center;">0</div>
<div class="a" style="top:1214.90px;font-size:15px;line-height:19px;color:#111;z-index:4;white-space:nowrap;left:870px;width:600px;text-align:center;">0</div>
<div class="a" style="top:1214.90px;font-size:15px;line-height:19px;color:#111;z-index:4;white-space:nowrap;left:1004px;width:600px;text-align:center;">0</div>
<div class="a" style="top:1214.90px;font-size:15px;line-height:19px;color:#111;z-index:4;white-space:nowrap;left:1130px;width:600px;text-align:center;">0</div>
<div class="a" style="left:1495px;top:1222.3px;width:57px;height:4px;background:#dcdcdc;z-index:5"><div style="width:0px;height:4px;background:#3a7be0"></div></div>
<div class="a" style="top:1214.90px;font-size:15px;line-height:19px;color:#111;z-index:4;white-space:nowrap;-webkit-text-stroke:0.45px currentColor;letter-spacing:0.1px;right:205px;">0.0%</div>
<svg class="a" style="left:1649px;top:1217.3px;z-index:5;" width="14" height="14" viewBox="0 0 14 14"><path d="M7 1.2L13.3 12.5H.7z" fill="#e0503a"/><path d="M7 5.2v3.6" stroke="#fff" stroke-width="1.4"/><circle cx="7" cy="10.5" r=".8" fill="#fff"/></svg>
<div class="a" style="top:1214.90px;font-size:15px;line-height:19px;color:#d9402c;z-index:4;white-space:nowrap;left:1668px;">0</div>
<svg class="a" style="left:1682px;top:1217.3px;z-index:5;" width="14" height="15" viewBox="0 0 14 15"><path d="M1.5 3.2L5 1.8l4 1.4 3.5-1.4v10l-3.5 1.4-4-1.4-3.5 1.4z M5 1.8v10 M9 3.2v10" fill="none" stroke="#111" stroke-width="1.3" stroke-linejoin="round"/></svg>
<div class="a" style="left:276px;top:1246px;width:1502px;height:42px;background:#ffffff;z-index:4"></div>
<div class="a" style="left:626px;top:1246px;width:149px;height:42px;background:#eef6ec;z-index:4"></div>
<div class="a" style="left:943px;top:1246px;width:153px;height:42px;background:#fdf5e6;z-index:4"></div>
<div class="a" style="left:1100px;top:1246px;width:140px;height:42px;background:#fae9e9;z-index:4"></div>
<div class="a" style="left:1244px;top:1246px;width:120px;height:42px;background:#e8f4fc;z-index:4"></div>
<div class="a" style="left:1368px;top:1246px;width:124px;height:42px;background:#f3f3f3;z-index:4"></div>
<div class="a" style="top:1256.36px;font-size:16px;line-height:20px;color:#111;z-index:4;white-space:nowrap;-webkit-text-stroke:0.58px currentColor;letter-spacing:0.3px;left:280px;">Au</div>
<div class="a" style="left:299px;top:1257.8px;width:128px;z-index:5"><div style="height:8px;background:linear-gradient(90deg,#b8b8b8 0px 8px,#a8a8a8 8px 16px,#b0b0b0 16px 24px,#c8c8c8 24px 32px,#a8a8a8 32px 40px,#b0b0b0 40px 48px,#d8d8d8 48px 56px,#c8c8c8 56px 64px,#d8d8d8 64px 72px,#d0d0d0 72px 80px,#a8a8a8 80px 88px,#c0c0c0 88px 96px,#d0d0d0 96px 104px,#c8c8c8 104px 112px,#d8d8d8 112px 120px,#d8d8d8 120px 128px)"></div><div style="height:8px;background:linear-gradient(90deg,#989898 0px 8px,#f4f4f4 8px 16px,#b0b0b0 16px 24px,#a0a0a0 24px 32px,#b8b8b8 32px 40px,#a0a0a0 40px 48px,#f4f4f4 48px 56px,#ececec 56px 64px,#909090 64px 72px,#a0a0a0 72px 80px,#a0a0a0 80px 88px,#a0a0a0 88px 96px,#909090 96px 104px,#989898 104px 112px,#909090 112px 120px,#b0b0b0 120px 128px)"></div></div>
<div class="a" style="top:1256.90px;font-size:15px;line-height:19px;color:#111;z-index:4;white-space:nowrap;left:263px;width:600px;text-align:center;-webkit-text-stroke:.45px #111">0</div>
<div class="a" style="top:1249.58px;font-size:14.5px;line-height:18px;color:#111;z-index:4;white-space:nowrap;-webkit-text-stroke:0.52px currentColor;letter-spacing:0.1px;left:400.5px;width:600px;text-align:center;">0</div>
<div class="a" style="top:1268.24px;font-size:12px;line-height:15px;color:#5a5a5a;z-index:4;white-space:nowrap;left:400.5px;width:600px;text-align:center;letter-spacing:.75px">(0.00€)</div>
<div class="a" style="top:1256.90px;font-size:15px;line-height:19px;color:#111;z-index:4;white-space:nowrap;left:559px;width:600px;text-align:center;">-</div>
<div class="a" style="top:1256.90px;font-size:15px;line-height:19px;color:#222;z-index:4;white-space:nowrap;font-style:italic;left:719.5px;width:600px;text-align:center;">0</div>
<div class="a" style="top:1256.90px;font-size:15px;line-height:19px;color:#111;z-index:4;white-space:nowrap;left:870px;width:600px;text-align:center;">0</div>
<div class="a" style="top:1256.90px;font-size:15px;line-height:19px;color:#111;z-index:4;white-space:nowrap;left:1004px;width:600px;text-align:center;">0</div>
<div class="a" style="top:1256.90px;font-size:15px;line-height:19px;color:#111;z-index:4;white-space:nowrap;left:1130px;width:600px;text-align:center;">0</div>
<div class="a" style="left:1495px;top:1264.3px;width:57px;height:4px;background:#dcdcdc;z-index:5"><div style="width:0px;height:4px;background:#3a7be0"></div></div>
<div class="a" style="top:1256.90px;font-size:15px;line-height:19px;color:#111;z-index:4;white-space:nowrap;-webkit-text-stroke:0.45px currentColor;letter-spacing:0.1px;right:205px;">0.0%</div>
<svg class="a" style="left:1649px;top:1259.3px;z-index:5;" width="14" height="14" viewBox="0 0 14 14"><path d="M7 1.2L13.3 12.5H.7z" fill="#e0503a"/><path d="M7 5.2v3.6" stroke="#fff" stroke-width="1.4"/><circle cx="7" cy="10.5" r=".8" fill="#fff"/></svg>
<div class="a" style="top:1256.90px;font-size:15px;line-height:19px;color:#d9402c;z-index:4;white-space:nowrap;left:1668px;">0</div>
<svg class="a" style="left:1682px;top:1259.3px;z-index:5;" width="14" height="15" viewBox="0 0 14 15"><path d="M1.5 3.2L5 1.8l4 1.4 3.5-1.4v10l-3.5 1.4-4-1.4-3.5 1.4z M5 1.8v10 M9 3.2v10" fill="none" stroke="#111" stroke-width="1.3" stroke-linejoin="round"/></svg>
<div class="card" style="left:276px;top:1312px;width:1502px;height:600px;border-radius:10px;z-index:3;box-shadow:none"></div>
<div class="a" style="top:1330.78px;font-size:16.5px;line-height:21px;color:#141414;z-index:4;white-space:nowrap;-webkit-text-stroke:0.59px currentColor;letter-spacing:0.2px;left:292.5px;">19 secteurs</div>
<div class="a" style="left:1644px;top:1328px;width:45px;height:26px;border:1px solid #c9c9c9;border-radius:4px;background:#f4f4f4;z-index:4;font-size:12.5px;line-height:24px;text-align:center;color:#555">Nom</div>
<div class="a" style="left:1693px;top:1328px;width:35px;height:26px;border:1px solid #c9c9c9;border-radius:4px;background:#f4f4f4;z-index:4;font-size:12.5px;line-height:24px;text-align:center;color:#555">Nb</div>
<div class="a" style="left:1732px;top:1328px;width:30px;height:26px;border:1px solid #c9c9c9;border-radius:4px;background:#f4f4f4;z-index:4;font-size:12.5px;line-height:24px;text-align:center;color:#555">%</div>
<div class="a" style="top:1379.50px;font-size:15px;line-height:19px;color:#1a1a1a;z-index:4;white-space:nowrap;-webkit-text-stroke:0.33px currentColor;letter-spacing:0.1px;left:292.5px;width:198px;overflow:hidden">Secteur Guehenno 1 (2094 ...</div>
<div class="a" style="left:492px;top:1371px;width:1270px;height:36px;border-radius:4px;background:#f2bc7f;overflow:hidden;z-index:4"><div style="width:8.5px;height:36px;background:#62d49a"></div></div>
<div class="a" style="top:1382.19px;font-size:11px;line-height:14px;color:#fff;z-index:5;white-space:nowrap;left:831.25px;width:600px;text-align:center;letter-spacing:.2px;text-shadow:0 1px 1px rgba(0,0,0,.15)">2080 (99%)</div>
<div class="a" style="top:1431.50px;font-size:15px;line-height:19px;color:#1a1a1a;z-index:4;white-space:nowrap;-webkit-text-stroke:0.33px currentColor;letter-spacing:0.1px;left:292.5px;width:198px;overflow:hidden">Vignerons (328 passages)</div>
<div class="a" style="left:492px;top:1423px;width:199px;height:36px;border-radius:4px;background:#f2bc7f;overflow:hidden;z-index:4"><div style="width:0px;height:36px;background:#62d49a"></div></div>
<div class="a" style="top:1434.19px;font-size:11px;line-height:14px;color:#fff;z-index:5;white-space:nowrap;left:291.5px;width:600px;text-align:center;letter-spacing:.2px;text-shadow:0 1px 1px rgba(0,0,0,.15)">328 (100%)</div>
<div class="a" style="top:1483.50px;font-size:15px;line-height:19px;color:#1a1a1a;z-index:4;white-space:nowrap;-webkit-text-stroke:0.33px currentColor;letter-spacing:0.1px;left:292.5px;width:198px;overflow:hidden">Secteur Haut <b class="blur"></b>(288 ...</div>
<div class="a" style="left:492px;top:1475px;width:174px;height:36px;border-radius:4px;background:#f2bc7f;overflow:hidden;z-index:4"><div style="width:0px;height:36px;background:#62d49a"></div></div>
<div class="a" style="top:1486.19px;font-size:11px;line-height:14px;color:#fff;z-index:5;white-space:nowrap;left:279.0px;width:600px;text-align:center;letter-spacing:.2px;text-shadow:0 1px 1px rgba(0,0,0,.15)">288 (100%)</div>
<div class="a" style="top:1535.50px;font-size:15px;line-height:19px;color:#1a1a1a;z-index:4;white-space:nowrap;-webkit-text-stroke:0.33px currentColor;letter-spacing:0.1px;left:292.5px;width:198px;overflow:hidden">Chez Thierry (159 passages)</div>
<div class="a" style="left:492px;top:1527px;width:96px;height:36px;border-radius:4px;background:#f2bc7f;overflow:hidden;z-index:4"><div style="width:0px;height:36px;background:#62d49a"></div></div>
<div class="a" style="top:1538.19px;font-size:11px;line-height:14px;color:#fff;z-index:5;white-space:nowrap;left:240.0px;width:600px;text-align:center;letter-spacing:.2px;text-shadow:0 1px 1px rgba(0,0,0,.15)">159 (100%)</div>
<div class="a" style="top:1587.50px;font-size:15px;line-height:19px;color:#1a1a1a;z-index:4;white-space:nowrap;-webkit-text-stroke:0.33px currentColor;letter-spacing:0.1px;left:292.5px;width:198px;overflow:hidden">Secteur<b class="blur2"></b>Nord (154 ...</div>
<div class="a" style="left:492px;top:1579px;width:93px;height:36px;border-radius:4px;background:#f2bc7f;overflow:hidden;z-index:4"><div style="width:1.5px;height:36px;background:#62d49a"></div></div>
<div class="a" style="top:1590.19px;font-size:11px;line-height:14px;color:#fff;z-index:5;white-space:nowrap;left:239.25px;width:600px;text-align:center;letter-spacing:.2px;text-shadow:0 1px 1px rgba(0,0,0,.15)">153 (99%)</div>
<div class="a" style="top:1639.50px;font-size:15px;line-height:19px;color:#1a1a1a;z-index:4;white-space:nowrap;-webkit-text-stroke:0.33px currentColor;letter-spacing:0.1px;left:292.5px;width:198px;overflow:hidden">Secteur<b class="blur2"></b>lon (93 pas...</div>
<div class="a" style="left:492px;top:1631px;width:56px;height:36px;border-radius:4px;background:#f2bc7f;overflow:hidden;z-index:4"><div style="width:2px;height:36px;background:#62d49a"></div></div>
<div class="a" style="top:1642.19px;font-size:11px;line-height:14px;color:#fff;z-index:5;white-space:nowrap;left:221.0px;width:600px;text-align:center;letter-spacing:.2px;text-shadow:0 1px 1px rgba(0,0,0,.15)">90 (96%)</div>
<div class="a" style="top:1691.50px;font-size:15px;line-height:19px;color:#1a1a1a;z-index:4;white-space:nowrap;-webkit-text-stroke:0.33px currentColor;letter-spacing:0.1px;left:292.5px;width:198px;overflow:hidden">Secteur Andrezieux (83 pa...</div>
<div class="a" style="left:492px;top:1683px;width:50px;height:36px;border-radius:4px;background:#f2bc7f;overflow:hidden;z-index:4"><div style="width:0px;height:36px;background:#62d49a"></div></div>
<div class="a" style="left:493px;top:1687px;font-size:11px;line-height:14px;color:#fff;z-index:5;letter-spacing:.2px;text-shadow:0 1px 1px rgba(0,0,0,.15)">83<br>(100%)</div>
<div class="a" style="top:1743.50px;font-size:15px;line-height:19px;color:#1a1a1a;z-index:4;white-space:nowrap;-webkit-text-stroke:0.33px currentColor;letter-spacing:0.1px;left:292.5px;width:198px;overflow:hidden">Secteur St Ex (62 passages)</div>
<div class="a" style="left:492px;top:1735px;width:37px;height:36px;border-radius:4px;background:#f2bc7f;overflow:hidden;z-index:4"><div style="width:0px;height:36px;background:#62d49a"></div></div>
<div class="a" style="left:493px;top:1739px;font-size:11px;line-height:14px;color:#fff;z-index:5;letter-spacing:.2px;text-shadow:0 1px 1px rgba(0,0,0,.15)">62<br>(100%)</div>
<div class="a" style="left:492px;top:1787px;width:26px;height:36px;border-radius:4px;background:#f2bc7f;overflow:hidden;z-index:4"><div style="width:0px;height:36px;background:#62d49a"></div></div>
<div class="a" style="left:493px;top:1790px;font-size:11px;line-height:14px;color:#fff;z-index:5;letter-spacing:.2px;white-space:nowrap;width:25px;overflow:hidden;text-shadow:0 1px 1px rgba(0,0,0,.15)">44 (1</div>
<div class="a" style="left:0;top:1799px;width:1800px;height:1px;background:#eef2f7;z-index:60"></div>
</body>
</html>
